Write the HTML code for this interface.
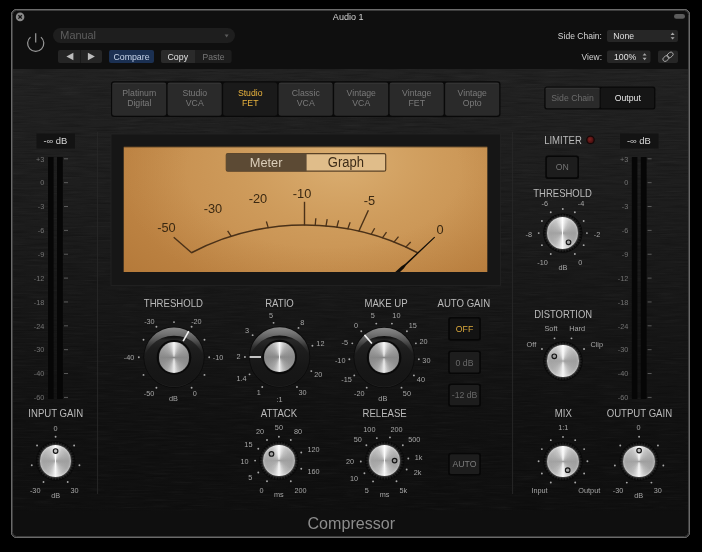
<!DOCTYPE html>
<html><head><meta charset="utf-8"><style>
html,body{margin:0;padding:0;background:#000;width:702px;height:552px;overflow:hidden;position:relative}
svg.l{display:block;position:absolute;left:0;top:0;will-change:transform}
text{font-family:"Liberation Sans", sans-serif}
.knob{position:absolute;border-radius:50%;box-shadow:0 0 2px 0.5px rgba(255,255,255,0.4), inset 0 0 2.5px 0.5px rgba(255,255,255,0.45)}
.knob.dk{box-shadow:0 0 1px rgba(255,255,255,0.25)}
</style></head><body>
<svg class="l" width="702" height="552" viewBox="0 0 702 552">
<defs>
<clipPath id="panelclip"><rect x="12" y="69" width="677" height="468"/></clipPath>
<linearGradient id="panelgrad" x1="0" y1="0" x2="0" y2="1">
 <stop offset="0" stop-color="#222222"/>
 <stop offset="0.25" stop-color="#1e1e1e"/>
 <stop offset="0.5" stop-color="#181818"/>
 <stop offset="0.75" stop-color="#121212"/>
 <stop offset="1" stop-color="#0f0f0f"/>
</linearGradient>
<filter id="brushD" x="0" y="0" width="1" height="1">
 <feTurbulence type="fractalNoise" baseFrequency="0.035 0.6" numOctaves="2" seed="4"/>
 <feColorMatrix type="matrix" values="0 0 0 0 0  0 0 0 0 0  0 0 0 0 0  2.2 0 0 0 -1.0"/>
</filter>
<filter id="brushL" x="0" y="0" width="1" height="1">
 <feTurbulence type="fractalNoise" baseFrequency="0.035 0.6" numOctaves="2" seed="9"/>
 <feColorMatrix type="matrix" values="0 0 0 0 1  0 0 0 0 1  0 0 0 0 1  1.2 0 0 0 -0.62"/>
</filter>
<linearGradient id="bottomfade" x1="0" y1="0" x2="0" y2="1">
 <stop offset="0" stop-color="#0f0f0f" stop-opacity="0.6"/>
 <stop offset="0.1" stop-color="#0f0f0f" stop-opacity="1"/>
 <stop offset="1" stop-color="#0f0f0f" stop-opacity="1"/>
</linearGradient>
<radialGradient id="vuglow" cx="0.6" cy="0.12" r="0.62" gradientTransform="translate(0.6 0.12) scale(1 1.9) translate(-0.6 -0.12)">
 <stop offset="0" stop-color="#dbaf72" stop-opacity="1"/>
 <stop offset="0.45" stop-color="#d4a464" stop-opacity="0.65"/>
 <stop offset="1" stop-color="#d4a464" stop-opacity="0"/>
</radialGradient>
<radialGradient id="vuvig" cx="0.55" cy="0.2" r="0.75" gradientTransform="translate(0.55 0.2) scale(1 1.6) translate(-0.55 -0.2)">
 <stop offset="0.5" stop-color="#9a5c1c" stop-opacity="0"/>
 <stop offset="1" stop-color="#9a5c1c" stop-opacity="0.36"/>
</radialGradient>
<linearGradient id="ringgrad" x1="0" y1="0" x2="0" y2="1">
 <stop offset="0" stop-color="#8a8a8a"/>
 <stop offset="0.1" stop-color="#747474"/>
 <stop offset="0.2" stop-color="#585858"/>
 <stop offset="0.32" stop-color="#323232"/>
 <stop offset="0.44" stop-color="#1c1c1c"/>
 <stop offset="0.6" stop-color="#171717"/>
 <stop offset="0.88" stop-color="#191919"/>
 <stop offset="1" stop-color="#242424"/>
</linearGradient>
<linearGradient id="ringinner" x1="0" y1="0" x2="0" y2="1">
 <stop offset="0" stop-color="#0c0c0c"/>
 <stop offset="0.03" stop-color="#141414"/>
 <stop offset="0.07" stop-color="#282828"/>
 <stop offset="0.2" stop-color="#1e1e1e"/>
 <stop offset="0.5" stop-color="#171717"/>
 <stop offset="1" stop-color="#141414"/>
</linearGradient>
<radialGradient id="led" cx="0.4" cy="0.4" r="0.6">
 <stop offset="0" stop-color="#7e2220"/>
 <stop offset="1" stop-color="#4a0e0e"/>
</radialGradient>
</defs>
<rect x="0" y="0" width="702" height="552" fill="#000"/>
<rect x="11.5" y="9.5" width="678" height="528" rx="5" ry="5" fill="#0f0f0f" stroke="#7c7c7c" stroke-width="1"/>
<rect x="12" y="69" width="677" height="468" fill="url(#panelgrad)"/>
<rect x="12" y="69" width="677" height="442" filter="url(#brushD)" opacity="0.2"/>
<rect x="12" y="69" width="677" height="442" filter="url(#brushL)" opacity="0.06"/>
<rect x="12" y="510" width="677" height="27" fill="url(#bottomfade)"/>
<rect x="12.5" y="10.5" width="676" height="526" rx="4" ry="4" fill="none" stroke="#3c3c3c" stroke-width="1"/>
<rect x="11.5" y="9.5" width="678" height="528" rx="5" ry="5" fill="none" stroke="#6a6a6a" stroke-width="1"/>
<circle cx="20.1" cy="16.9" r="4.3" fill="#8a8a8a"/>
<path d="M18.4 15.2 L21.8 18.6 M21.8 15.2 L18.4 18.6" stroke="#141414" stroke-width="1.3"/>
<text x="348.20" y="19.87" font-size="9.68" fill="#d4d4d4" text-anchor="middle" textLength="30.70" lengthAdjust="spacingAndGlyphs" >Audio 1</text>
<rect x="674" y="14" width="11" height="4.8" rx="2.4" fill="#5c5c5c"/>
<path d="M30.49 37.1 A8.1 8.1 0 1 0 40.91 37.1" fill="none" stroke="#9a9a9a" stroke-width="1.2"/>
<line x1="35.7" y1="33.2" x2="35.7" y2="42.4" stroke="#9a9a9a" stroke-width="1.2"/>
<rect x="53" y="28" width="182" height="15" rx="7.5" fill="#1e1e1e"/>
<text x="60.30" y="39.48" font-size="11.66" fill="#5e5e5e" text-anchor="start" textLength="35.75" lengthAdjust="spacingAndGlyphs" >Manual</text>
<path d="M224.6 34.6 L228.6 34.6 L226.6 37.6 Z" fill="#5a5a5a"/>
<rect x="58" y="50" width="44" height="13" rx="2" fill="#252525"/>
<line x1="80.5" y1="50" x2="80.5" y2="63" stroke="#1a1a1a" stroke-width="1"/>
<path d="M66.4 56.5 L73.4 52.8 L73.4 60.2 Z" fill="#bdbdbd"/>
<path d="M94.9 56.5 L87.9 52.8 L87.9 60.2 Z" fill="#bdbdbd"/>
<rect x="109" y="50" width="45" height="13" rx="2" fill="#1b3052"/>
<text x="131.50" y="59.87" font-size="9.42" fill="#c6d3e8" text-anchor="middle" textLength="36.19" lengthAdjust="spacingAndGlyphs" >Compare</text>
<rect x="161" y="50" width="70.6" height="13" rx="2" fill="#1d1d1d"/>
<path d="M163 50 H195 V63 H163 A2 2 0 0 1 161 61 V52 A2 2 0 0 1 163 50 Z" fill="#2a2a2a"/>
<text x="177.80" y="59.87" font-size="9.42" fill="#e2e2e2" text-anchor="middle" textLength="20.54" lengthAdjust="spacingAndGlyphs" >Copy</text>
<text x="213.50" y="59.79" font-size="9.20" fill="#787878" text-anchor="middle" textLength="21.99" lengthAdjust="spacingAndGlyphs" >Paste</text>
<text x="602.00" y="39.28" font-size="9.15" fill="#d2d2d2" text-anchor="end" textLength="44.20" lengthAdjust="spacingAndGlyphs" >Side Chain:</text>
<rect x="607" y="30" width="71" height="12" rx="2" fill="#262626"/>
<text x="613.30" y="39.33" font-size="9.31" fill="#e0e0e0" text-anchor="start" textLength="20.80" lengthAdjust="spacingAndGlyphs" >None</text>
<path d="M670.6 35 L672.6 32.6 L674.6 35 Z M670.6 37.2 L672.6 39.6 L674.6 37.2 Z" fill="#a8a8a8"/>
<text x="602.00" y="59.82" font-size="8.99" fill="#d2d2d2" text-anchor="end" textLength="20.39" lengthAdjust="spacingAndGlyphs" >View:</text>
<rect x="607" y="50.5" width="43.5" height="12.5" rx="2" fill="#262626"/>
<text x="614.00" y="59.95" font-size="9.36" fill="#e0e0e0" text-anchor="start" textLength="22.38" lengthAdjust="spacingAndGlyphs" >100%</text>
<path d="M642.6 55.6 L644.6 53.2 L646.6 55.6 Z M642.6 57.8 L644.6 60.2 L646.6 57.8 Z" fill="#a8a8a8"/>
<rect x="658" y="50.5" width="20" height="12.5" rx="2" fill="#262626"/>
<g transform="translate(668 56.75) rotate(-40)" fill="none" stroke="#aaaaaa" stroke-width="0.9"><rect x="-6" y="-2.2" width="6.6" height="4.4" rx="2.2"/><rect x="-0.6" y="-2.2" width="6.6" height="4.4" rx="2.2"/></g>
<rect x="111.0" y="81.3" width="389.5" height="35.6" rx="3" fill="#090909"/>
<rect x="112.10" y="82.4" width="54.10" height="33.3" rx="2.5" fill="#2a2a2a"/>
<rect x="112.70" y="82.9" width="52.90" height="1" fill="#353535"/>
<text x="139.25" y="96.23" font-size="9.31" fill="#7a7a7a" text-anchor="middle" textLength="33.85" lengthAdjust="spacingAndGlyphs" >Platinum</text>
<text x="139.25" y="105.53" font-size="9.31" fill="#7a7a7a" text-anchor="middle" textLength="24.18" lengthAdjust="spacingAndGlyphs" >Digital</text>
<rect x="167.60" y="82.4" width="54.10" height="33.3" rx="2.5" fill="#2a2a2a"/>
<rect x="168.20" y="82.9" width="52.90" height="1" fill="#353535"/>
<text x="194.75" y="96.23" font-size="9.31" fill="#7a7a7a" text-anchor="middle" textLength="24.67" lengthAdjust="spacingAndGlyphs" >Studio</text>
<text x="194.75" y="105.53" font-size="9.31" fill="#7a7a7a" text-anchor="middle" textLength="17.89" lengthAdjust="spacingAndGlyphs" >VCA</text>
<rect x="223.10" y="82.4" width="54.10" height="33.3" rx="2.5" fill="#1a1a1a"/>
<text x="250.25" y="96.23" font-size="9.31" fill="#e9b33e" text-anchor="middle" textLength="24.67" lengthAdjust="spacingAndGlyphs" >Studio</text>
<text x="250.25" y="105.53" font-size="9.31" fill="#e9b33e" text-anchor="middle" textLength="16.43" lengthAdjust="spacingAndGlyphs" >FET</text>
<rect x="278.60" y="82.4" width="54.10" height="33.3" rx="2.5" fill="#2a2a2a"/>
<rect x="279.20" y="82.9" width="52.90" height="1" fill="#353535"/>
<text x="305.75" y="96.23" font-size="9.31" fill="#7a7a7a" text-anchor="middle" textLength="28.04" lengthAdjust="spacingAndGlyphs" >Classic</text>
<text x="305.75" y="105.53" font-size="9.31" fill="#7a7a7a" text-anchor="middle" textLength="17.89" lengthAdjust="spacingAndGlyphs" >VCA</text>
<rect x="334.10" y="82.4" width="54.10" height="33.3" rx="2.5" fill="#2a2a2a"/>
<rect x="334.70" y="82.9" width="52.90" height="1" fill="#353535"/>
<text x="361.25" y="96.23" font-size="9.31" fill="#7a7a7a" text-anchor="middle" textLength="29.35" lengthAdjust="spacingAndGlyphs" >Vintage</text>
<text x="361.25" y="105.53" font-size="9.31" fill="#7a7a7a" text-anchor="middle" textLength="17.89" lengthAdjust="spacingAndGlyphs" >VCA</text>
<rect x="389.60" y="82.4" width="54.10" height="33.3" rx="2.5" fill="#2a2a2a"/>
<rect x="390.20" y="82.9" width="52.90" height="1" fill="#353535"/>
<text x="416.75" y="96.23" font-size="9.31" fill="#7a7a7a" text-anchor="middle" textLength="29.35" lengthAdjust="spacingAndGlyphs" >Vintage</text>
<text x="416.75" y="105.53" font-size="9.31" fill="#7a7a7a" text-anchor="middle" textLength="16.43" lengthAdjust="spacingAndGlyphs" >FET</text>
<rect x="445.10" y="82.4" width="54.10" height="33.3" rx="2.5" fill="#2a2a2a"/>
<rect x="445.70" y="82.9" width="52.90" height="1" fill="#353535"/>
<text x="472.25" y="96.23" font-size="9.31" fill="#7a7a7a" text-anchor="middle" textLength="29.35" lengthAdjust="spacingAndGlyphs" >Vintage</text>
<text x="472.25" y="105.53" font-size="9.31" fill="#7a7a7a" text-anchor="middle" textLength="18.86" lengthAdjust="spacingAndGlyphs" >Opto</text>
<rect x="544.3" y="86.5" width="111.1" height="23" rx="2.5" fill="#080808"/>
<rect x="545.6" y="87.8" width="54" height="20.4" rx="1.5" fill="#2a2a2a"/>
<rect x="545.6" y="87.8" width="54" height="1" fill="#353535"/>
<rect x="600.6" y="87.8" width="53.5" height="20.4" rx="1.5" fill="#151515"/>
<text x="572.60" y="101.33" font-size="9.31" fill="#6c6c6c" text-anchor="middle" textLength="42.56" lengthAdjust="spacingAndGlyphs" >Side Chain</text>
<text x="627.80" y="101.33" font-size="9.31" fill="#e8e8e8" text-anchor="middle" textLength="26.12" lengthAdjust="spacingAndGlyphs" >Output</text>
<line x1="97.6" y1="132" x2="97.6" y2="494" stroke="#272727" stroke-width="1"/>
<line x1="512.6" y1="132" x2="512.6" y2="494" stroke="#272727" stroke-width="1"/>
<rect x="36.5" y="133.5" width="38.5" height="15" fill="#131313"/>
<text x="55.40" y="143.93" font-size="8.46" fill="#dadada" text-anchor="middle" textLength="23.94" lengthAdjust="spacingAndGlyphs" >-∞ dB</text>
<rect x="48" y="157" width="5.6" height="242" fill="#060606"/>
<rect x="57" y="157" width="5.8" height="242" fill="#060606"/>
<text x="44.30" y="161.60" font-size="7.81" fill="#747474" text-anchor="end" textLength="8.32" lengthAdjust="spacingAndGlyphs" >+3</text>
<line x1="64" y1="158.80" x2="68" y2="158.80" stroke="#7a7a7a" stroke-width="0.7"/>
<text x="44.30" y="185.46" font-size="7.81" fill="#747474" text-anchor="end" textLength="4.06" lengthAdjust="spacingAndGlyphs" >0</text>
<line x1="64" y1="182.66" x2="68" y2="182.66" stroke="#7a7a7a" stroke-width="0.7"/>
<text x="44.30" y="209.32" font-size="7.81" fill="#747474" text-anchor="end" textLength="6.49" lengthAdjust="spacingAndGlyphs" >-3</text>
<line x1="64" y1="206.52" x2="68" y2="206.52" stroke="#7a7a7a" stroke-width="0.7"/>
<text x="44.30" y="233.18" font-size="7.81" fill="#747474" text-anchor="end" textLength="6.49" lengthAdjust="spacingAndGlyphs" >-6</text>
<line x1="64" y1="230.38" x2="68" y2="230.38" stroke="#7a7a7a" stroke-width="0.7"/>
<text x="44.30" y="257.04" font-size="7.81" fill="#747474" text-anchor="end" textLength="6.49" lengthAdjust="spacingAndGlyphs" >-9</text>
<line x1="64" y1="254.24" x2="68" y2="254.24" stroke="#7a7a7a" stroke-width="0.7"/>
<text x="44.30" y="280.90" font-size="7.81" fill="#747474" text-anchor="end" textLength="10.55" lengthAdjust="spacingAndGlyphs" >-12</text>
<line x1="64" y1="278.10" x2="68" y2="278.10" stroke="#7a7a7a" stroke-width="0.7"/>
<text x="44.30" y="304.76" font-size="7.81" fill="#747474" text-anchor="end" textLength="10.55" lengthAdjust="spacingAndGlyphs" >-18</text>
<line x1="64" y1="301.96" x2="68" y2="301.96" stroke="#7a7a7a" stroke-width="0.7"/>
<text x="44.30" y="328.62" font-size="7.81" fill="#747474" text-anchor="end" textLength="10.55" lengthAdjust="spacingAndGlyphs" >-24</text>
<line x1="64" y1="325.82" x2="68" y2="325.82" stroke="#7a7a7a" stroke-width="0.7"/>
<text x="44.30" y="352.48" font-size="7.81" fill="#747474" text-anchor="end" textLength="10.55" lengthAdjust="spacingAndGlyphs" >-30</text>
<line x1="64" y1="349.68" x2="68" y2="349.68" stroke="#7a7a7a" stroke-width="0.7"/>
<text x="44.30" y="376.34" font-size="7.81" fill="#747474" text-anchor="end" textLength="10.55" lengthAdjust="spacingAndGlyphs" >-40</text>
<line x1="64" y1="373.54" x2="68" y2="373.54" stroke="#7a7a7a" stroke-width="0.7"/>
<text x="44.30" y="400.20" font-size="7.81" fill="#747474" text-anchor="end" textLength="10.55" lengthAdjust="spacingAndGlyphs" >-60</text>
<line x1="64" y1="397.40" x2="68" y2="397.40" stroke="#7a7a7a" stroke-width="0.7"/>
<rect x="620" y="133.5" width="38.5" height="15" fill="#131313"/>
<text x="638.90" y="143.93" font-size="8.46" fill="#dadada" text-anchor="middle" textLength="23.94" lengthAdjust="spacingAndGlyphs" >-∞ dB</text>
<rect x="631.8" y="157" width="5.6" height="242" fill="#060606"/>
<rect x="640.8" y="157" width="5.8" height="242" fill="#060606"/>
<text x="628.30" y="161.60" font-size="7.81" fill="#747474" text-anchor="end" textLength="8.32" lengthAdjust="spacingAndGlyphs" >+3</text>
<line x1="647.6" y1="158.80" x2="651.6" y2="158.80" stroke="#7a7a7a" stroke-width="0.7"/>
<text x="628.30" y="185.46" font-size="7.81" fill="#747474" text-anchor="end" textLength="4.06" lengthAdjust="spacingAndGlyphs" >0</text>
<line x1="647.6" y1="182.66" x2="651.6" y2="182.66" stroke="#7a7a7a" stroke-width="0.7"/>
<text x="628.30" y="209.32" font-size="7.81" fill="#747474" text-anchor="end" textLength="6.49" lengthAdjust="spacingAndGlyphs" >-3</text>
<line x1="647.6" y1="206.52" x2="651.6" y2="206.52" stroke="#7a7a7a" stroke-width="0.7"/>
<text x="628.30" y="233.18" font-size="7.81" fill="#747474" text-anchor="end" textLength="6.49" lengthAdjust="spacingAndGlyphs" >-6</text>
<line x1="647.6" y1="230.38" x2="651.6" y2="230.38" stroke="#7a7a7a" stroke-width="0.7"/>
<text x="628.30" y="257.04" font-size="7.81" fill="#747474" text-anchor="end" textLength="6.49" lengthAdjust="spacingAndGlyphs" >-9</text>
<line x1="647.6" y1="254.24" x2="651.6" y2="254.24" stroke="#7a7a7a" stroke-width="0.7"/>
<text x="628.30" y="280.90" font-size="7.81" fill="#747474" text-anchor="end" textLength="10.55" lengthAdjust="spacingAndGlyphs" >-12</text>
<line x1="647.6" y1="278.10" x2="651.6" y2="278.10" stroke="#7a7a7a" stroke-width="0.7"/>
<text x="628.30" y="304.76" font-size="7.81" fill="#747474" text-anchor="end" textLength="10.55" lengthAdjust="spacingAndGlyphs" >-18</text>
<line x1="647.6" y1="301.96" x2="651.6" y2="301.96" stroke="#7a7a7a" stroke-width="0.7"/>
<text x="628.30" y="328.62" font-size="7.81" fill="#747474" text-anchor="end" textLength="10.55" lengthAdjust="spacingAndGlyphs" >-24</text>
<line x1="647.6" y1="325.82" x2="651.6" y2="325.82" stroke="#7a7a7a" stroke-width="0.7"/>
<text x="628.30" y="352.48" font-size="7.81" fill="#747474" text-anchor="end" textLength="10.55" lengthAdjust="spacingAndGlyphs" >-30</text>
<line x1="647.6" y1="349.68" x2="651.6" y2="349.68" stroke="#7a7a7a" stroke-width="0.7"/>
<text x="628.30" y="376.34" font-size="7.81" fill="#747474" text-anchor="end" textLength="10.55" lengthAdjust="spacingAndGlyphs" >-40</text>
<line x1="647.6" y1="373.54" x2="651.6" y2="373.54" stroke="#7a7a7a" stroke-width="0.7"/>
<text x="628.30" y="400.20" font-size="7.81" fill="#747474" text-anchor="end" textLength="10.55" lengthAdjust="spacingAndGlyphs" >-60</text>
<line x1="647.6" y1="397.40" x2="651.6" y2="397.40" stroke="#7a7a7a" stroke-width="0.7"/>
<rect x="111" y="134" width="389.5" height="151.5" fill="#161616" stroke="#242424" stroke-width="0.8"/>
<svg x="123.5" y="146.5" width="364" height="125.5" overflow="hidden"><rect x="0" y="0" width="364" height="125.5" fill="#c38a4a"/><rect x="0" y="0" width="364" height="125.5" fill="url(#vuglow)"/><rect x="0" y="0" width="364" height="125.5" fill="url(#vushade)"/><rect x="0" y="0" width="364" height="125.5" fill="url(#vuvig)"/></svg>
<line x1="123.5" y1="147" x2="487.5" y2="147" stroke="#000" stroke-opacity="0.45" stroke-width="1"/>
<rect x="226.3" y="153.6" width="159.4" height="17.6" rx="1.5" fill="#e0bd8a" stroke="#5a4226" stroke-width="1.2"/>
<path d="M227.8 153.6 H306.6 V171.2 H227.8 A1.5 1.5 0 0 1 226.3 169.7 V155.1 A1.5 1.5 0 0 1 227.8 153.6 Z" fill="#5c4a34"/>
<text x="266.10" y="167.10" font-size="13.70" fill="#dccfbb" text-anchor="middle" textLength="32.72" lengthAdjust="spacingAndGlyphs" >Meter</text>
<text x="345.90" y="167.18" font-size="13.91" fill="#3d2c18" text-anchor="middle" textLength="36.13" lengthAdjust="spacingAndGlyphs" >Graph</text>
<path d="M191.45 252.73 A 244.3 244.3 0 0 1 417.55 252.73" fill="none" stroke="#4a3118" stroke-width="1.6"/>
<line x1="191.83" y1="253.06" x2="173.72" y2="237.31" stroke="#4a3118" stroke-width="1.4"/>
<line x1="231.40" y1="236.70" x2="227.63" y2="230.80" stroke="#4a3118" stroke-width="1.3"/>
<line x1="268.35" y1="228.19" x2="266.38" y2="221.47" stroke="#4a3118" stroke-width="1.3"/>
<line x1="304.50" y1="225.50" x2="304.50" y2="201.80" stroke="#4a3118" stroke-width="1.4"/>
<line x1="315.20" y1="225.73" x2="315.83" y2="218.26" stroke="#4a3118" stroke-width="1.3"/>
<line x1="325.93" y1="226.44" x2="327.20" y2="219.05" stroke="#4a3118" stroke-width="1.3"/>
<line x1="336.73" y1="227.64" x2="338.62" y2="220.38" stroke="#4a3118" stroke-width="1.3"/>
<line x1="347.63" y1="229.34" x2="350.14" y2="222.27" stroke="#4a3118" stroke-width="1.3"/>
<line x1="358.67" y1="231.58" x2="368.38" y2="210.18" stroke="#4a3118" stroke-width="1.4"/>
<line x1="370.94" y1="234.71" x2="374.66" y2="228.20" stroke="#4a3118" stroke-width="1.3"/>
<line x1="382.25" y1="238.21" x2="386.51" y2="232.03" stroke="#4a3118" stroke-width="1.3"/>
<line x1="393.77" y1="242.40" x2="398.53" y2="236.61" stroke="#4a3118" stroke-width="1.3"/>
<line x1="405.49" y1="247.37" x2="410.72" y2="242.00" stroke="#4a3118" stroke-width="1.3"/>
<clipPath id="vuclip"><rect x="123.5" y="146.5" width="364" height="125.5"/></clipPath>
<g clip-path="url(#vuclip)"><path d="M435.08 237.60 L406.09 265.17 L403.72 268.49 L392.13 279.51 L389.80 277.03 L401.53 266.15 L404.99 264.00 L434.32 236.80 Z" fill="#120e08"/></g>
<text x="166.40" y="231.70" font-size="13.70" fill="#3b2912" text-anchor="middle" textLength="18.50" lengthAdjust="spacingAndGlyphs" >-50</text>
<text x="213.00" y="212.90" font-size="13.70" fill="#3b2912" text-anchor="middle" textLength="18.50" lengthAdjust="spacingAndGlyphs" >-30</text>
<text x="258.00" y="202.70" font-size="13.70" fill="#3b2912" text-anchor="middle" textLength="18.50" lengthAdjust="spacingAndGlyphs" >-20</text>
<text x="302.10" y="198.20" font-size="13.70" fill="#3b2912" text-anchor="middle" textLength="18.50" lengthAdjust="spacingAndGlyphs" >-10</text>
<text x="369.40" y="204.90" font-size="13.70" fill="#3b2912" text-anchor="middle" textLength="11.38" lengthAdjust="spacingAndGlyphs" >-5</text>
<text x="440.10" y="233.80" font-size="13.70" fill="#3b2912" text-anchor="middle" textLength="7.12" lengthAdjust="spacingAndGlyphs" >0</text>
<text x="173.40" y="307.08" font-size="10.27" fill="#bababa" text-anchor="middle" textLength="59.21" lengthAdjust="spacingAndGlyphs" >THRESHOLD</text>
<circle cx="156.40" cy="387.78" r="0.95" fill="#a8a8a8"/>
<circle cx="143.52" cy="374.90" r="0.95" fill="#a8a8a8"/>
<circle cx="138.80" cy="357.30" r="0.95" fill="#a8a8a8"/>
<circle cx="143.52" cy="339.70" r="0.95" fill="#a8a8a8"/>
<circle cx="156.40" cy="326.82" r="0.95" fill="#a8a8a8"/>
<circle cx="174.00" cy="322.10" r="0.95" fill="#a8a8a8"/>
<circle cx="191.60" cy="326.82" r="0.95" fill="#a8a8a8"/>
<circle cx="204.48" cy="339.70" r="0.95" fill="#a8a8a8"/>
<circle cx="209.20" cy="357.30" r="0.95" fill="#a8a8a8"/>
<circle cx="204.48" cy="374.90" r="0.95" fill="#a8a8a8"/>
<circle cx="191.60" cy="387.78" r="0.95" fill="#a8a8a8"/>
<text x="149.40" y="323.60" font-size="7.81" fill="#a6a6a6" text-anchor="middle" textLength="10.55" lengthAdjust="spacingAndGlyphs" >-30</text>
<text x="196.40" y="323.60" font-size="7.81" fill="#a6a6a6" text-anchor="middle" textLength="10.55" lengthAdjust="spacingAndGlyphs" >-20</text>
<text x="129.00" y="359.80" font-size="7.81" fill="#a6a6a6" text-anchor="middle" textLength="10.55" lengthAdjust="spacingAndGlyphs" >-40</text>
<text x="218.00" y="359.80" font-size="7.81" fill="#a6a6a6" text-anchor="middle" textLength="10.55" lengthAdjust="spacingAndGlyphs" >-10</text>
<text x="149.10" y="395.50" font-size="7.81" fill="#a6a6a6" text-anchor="middle" textLength="10.55" lengthAdjust="spacingAndGlyphs" >-50</text>
<text x="194.70" y="395.50" font-size="7.81" fill="#a6a6a6" text-anchor="middle" textLength="4.06" lengthAdjust="spacingAndGlyphs" >0</text>
<text x="173.40" y="401.10" font-size="7.81" fill="#a6a6a6" text-anchor="middle" textLength="8.93" lengthAdjust="spacingAndGlyphs" >dB</text>
<clipPath id="kc1"><circle cx="174" cy="357.3" r="29.2"/></clipPath>
<circle cx="174" cy="357.3" r="30.6" fill="#0b0b0b"/>
<circle cx="174" cy="357.3" r="29.8" fill="url(#ringgrad)"/>
<circle cx="174" cy="367.2" r="31.5" fill="url(#ringinner)" clip-path="url(#kc1)"/>
<circle cx="174" cy="357.3" r="17.3" fill="#090909"/>
<line x1="183.16" y1="341.11" x2="188.77" y2="331.19" stroke="#f2f2f2" stroke-width="1.6"/>
<text x="279.50" y="307.08" font-size="10.27" fill="#bababa" text-anchor="middle" textLength="28.62" lengthAdjust="spacingAndGlyphs" >RATIO</text>
<circle cx="262.25" cy="387.05" r="0.95" fill="#a8a8a8"/>
<circle cx="249.55" cy="374.35" r="0.95" fill="#a8a8a8"/>
<circle cx="244.90" cy="357.00" r="0.95" fill="#a8a8a8"/>
<circle cx="252.63" cy="335.16" r="0.95" fill="#a8a8a8"/>
<circle cx="273.57" cy="322.83" r="0.95" fill="#a8a8a8"/>
<circle cx="298.50" cy="327.90" r="0.95" fill="#a8a8a8"/>
<circle cx="312.41" cy="345.70" r="0.95" fill="#a8a8a8"/>
<circle cx="311.30" cy="371.11" r="0.95" fill="#a8a8a8"/>
<circle cx="296.95" cy="387.05" r="0.95" fill="#a8a8a8"/>
<text x="271.10" y="317.80" font-size="7.81" fill="#a6a6a6" text-anchor="middle" textLength="4.06" lengthAdjust="spacingAndGlyphs" >5</text>
<text x="302.30" y="324.50" font-size="7.81" fill="#a6a6a6" text-anchor="middle" textLength="4.06" lengthAdjust="spacingAndGlyphs" >8</text>
<text x="247.00" y="332.80" font-size="7.81" fill="#a6a6a6" text-anchor="middle" textLength="4.06" lengthAdjust="spacingAndGlyphs" >3</text>
<text x="238.50" y="359.40" font-size="7.81" fill="#a6a6a6" text-anchor="middle" textLength="4.06" lengthAdjust="spacingAndGlyphs" >2</text>
<text x="241.60" y="381.20" font-size="7.81" fill="#a6a6a6" text-anchor="middle" textLength="10.15" lengthAdjust="spacingAndGlyphs" >1.4</text>
<text x="258.80" y="395.30" font-size="7.81" fill="#a6a6a6" text-anchor="middle" textLength="4.06" lengthAdjust="spacingAndGlyphs" >1</text>
<text x="279.60" y="401.60" font-size="7.81" fill="#a6a6a6" text-anchor="middle" textLength="6.09" lengthAdjust="spacingAndGlyphs" >:1</text>
<text x="302.60" y="395.30" font-size="7.81" fill="#a6a6a6" text-anchor="middle" textLength="8.12" lengthAdjust="spacingAndGlyphs" >30</text>
<text x="318.20" y="376.60" font-size="7.81" fill="#a6a6a6" text-anchor="middle" textLength="8.12" lengthAdjust="spacingAndGlyphs" >20</text>
<text x="320.40" y="346.40" font-size="7.81" fill="#a6a6a6" text-anchor="middle" textLength="8.12" lengthAdjust="spacingAndGlyphs" >12</text>
<clipPath id="kc2"><circle cx="279.6" cy="357" r="29.2"/></clipPath>
<circle cx="279.6" cy="357" r="30.6" fill="#0b0b0b"/>
<circle cx="279.6" cy="357" r="29.8" fill="url(#ringgrad)"/>
<circle cx="279.6" cy="366.9" r="31.5" fill="url(#ringinner)" clip-path="url(#kc2)"/>
<circle cx="279.6" cy="357" r="17.3" fill="#090909"/>
<line x1="261.00" y1="357.00" x2="249.60" y2="357.00" stroke="#f2f2f2" stroke-width="1.6"/>
<text x="386.00" y="307.08" font-size="10.27" fill="#bababa" text-anchor="middle" textLength="43.21" lengthAdjust="spacingAndGlyphs" >MAKE UP</text>
<circle cx="366.70" cy="387.64" r="0.95" fill="#a8a8a8"/>
<circle cx="354.27" cy="375.42" r="0.95" fill="#a8a8a8"/>
<circle cx="349.35" cy="359.32" r="0.95" fill="#a8a8a8"/>
<circle cx="352.31" cy="343.35" r="0.95" fill="#a8a8a8"/>
<circle cx="361.27" cy="331.24" r="0.95" fill="#a8a8a8"/>
<circle cx="376.27" cy="323.59" r="0.95" fill="#a8a8a8"/>
<circle cx="391.93" cy="323.59" r="0.95" fill="#a8a8a8"/>
<circle cx="406.93" cy="331.24" r="0.95" fill="#a8a8a8"/>
<circle cx="415.89" cy="343.35" r="0.95" fill="#a8a8a8"/>
<circle cx="418.85" cy="359.32" r="0.95" fill="#a8a8a8"/>
<circle cx="413.93" cy="375.42" r="0.95" fill="#a8a8a8"/>
<circle cx="401.50" cy="387.64" r="0.95" fill="#a8a8a8"/>
<text x="356.00" y="327.70" font-size="7.81" fill="#a6a6a6" text-anchor="middle" textLength="4.06" lengthAdjust="spacingAndGlyphs" >0</text>
<text x="372.90" y="318.30" font-size="7.81" fill="#a6a6a6" text-anchor="middle" textLength="4.06" lengthAdjust="spacingAndGlyphs" >5</text>
<text x="396.40" y="318.30" font-size="7.81" fill="#a6a6a6" text-anchor="middle" textLength="8.12" lengthAdjust="spacingAndGlyphs" >10</text>
<text x="412.70" y="327.70" font-size="7.81" fill="#a6a6a6" text-anchor="middle" textLength="8.12" lengthAdjust="spacingAndGlyphs" >15</text>
<text x="423.60" y="344.00" font-size="7.81" fill="#a6a6a6" text-anchor="middle" textLength="8.12" lengthAdjust="spacingAndGlyphs" >20</text>
<text x="426.40" y="362.80" font-size="7.81" fill="#a6a6a6" text-anchor="middle" textLength="8.12" lengthAdjust="spacingAndGlyphs" >30</text>
<text x="420.90" y="381.70" font-size="7.81" fill="#a6a6a6" text-anchor="middle" textLength="8.12" lengthAdjust="spacingAndGlyphs" >40</text>
<text x="406.90" y="395.70" font-size="7.81" fill="#a6a6a6" text-anchor="middle" textLength="8.12" lengthAdjust="spacingAndGlyphs" >50</text>
<text x="382.80" y="401.10" font-size="7.81" fill="#a6a6a6" text-anchor="middle" textLength="8.93" lengthAdjust="spacingAndGlyphs" >dB</text>
<text x="359.30" y="395.70" font-size="7.81" fill="#a6a6a6" text-anchor="middle" textLength="10.55" lengthAdjust="spacingAndGlyphs" >-20</text>
<text x="346.60" y="381.70" font-size="7.81" fill="#a6a6a6" text-anchor="middle" textLength="10.55" lengthAdjust="spacingAndGlyphs" >-15</text>
<text x="340.20" y="363.10" font-size="7.81" fill="#a6a6a6" text-anchor="middle" textLength="10.55" lengthAdjust="spacingAndGlyphs" >-10</text>
<text x="344.80" y="344.90" font-size="7.81" fill="#a6a6a6" text-anchor="middle" textLength="6.49" lengthAdjust="spacingAndGlyphs" >-5</text>
<clipPath id="kc3"><circle cx="384.1" cy="357.5" r="29.2"/></clipPath>
<circle cx="384.1" cy="357.5" r="30.6" fill="#0b0b0b"/>
<circle cx="384.1" cy="357.5" r="29.8" fill="url(#ringgrad)"/>
<circle cx="384.1" cy="367.4" r="31.5" fill="url(#ringinner)" clip-path="url(#kc3)"/>
<circle cx="384.1" cy="357.5" r="17.3" fill="#090909"/>
<line x1="371.90" y1="343.46" x2="364.42" y2="334.86" stroke="#f2f2f2" stroke-width="1.6"/>
<text x="463.80" y="307.08" font-size="10.27" fill="#bababa" text-anchor="middle" textLength="52.63" lengthAdjust="spacingAndGlyphs" >AUTO GAIN</text>
<rect x="448.2" y="317" width="32.7" height="23.7" rx="2.5" fill="#070707"/>
<rect x="449.8" y="318.6" width="29.500000000000004" height="20.5" rx="1.5" fill="#131313"/>
<text x="464.55" y="332.18" font-size="9.31" fill="#dcaa3c" text-anchor="middle" textLength="17.40" lengthAdjust="spacingAndGlyphs" >OFF</text>
<rect x="448.2" y="350.4" width="32.7" height="23.6" rx="2.5" fill="#070707"/>
<rect x="449.8" y="352.0" width="29.500000000000004" height="20.400000000000002" rx="1.5" fill="#1d1d1d"/>
<text x="464.55" y="365.53" font-size="9.31" fill="#686868" text-anchor="middle" textLength="17.90" lengthAdjust="spacingAndGlyphs" >0 dB</text>
<rect x="448.2" y="383.4" width="32.7" height="23.4" rx="2.5" fill="#070707"/>
<rect x="449.8" y="385.0" width="29.500000000000004" height="20.2" rx="1.5" fill="#1d1d1d"/>
<text x="464.55" y="398.43" font-size="9.31" fill="#686868" text-anchor="middle" textLength="25.63" lengthAdjust="spacingAndGlyphs" >-12 dB</text>
<rect x="448.2" y="452.7" width="32.7" height="22.8" rx="2.5" fill="#070707"/>
<rect x="449.8" y="454.3" width="29.500000000000004" height="19.6" rx="1.5" fill="#1d1d1d"/>
<text x="464.55" y="467.43" font-size="9.31" fill="#7c7c7c" text-anchor="middle" textLength="24.01" lengthAdjust="spacingAndGlyphs" >AUTO</text>
<text x="279.00" y="417.28" font-size="10.27" fill="#bababa" text-anchor="middle" textLength="36.45" lengthAdjust="spacingAndGlyphs" >ATTACK</text>
<circle cx="267.00" cy="481.21" r="0.95" fill="#a8a8a8"/>
<circle cx="258.29" cy="472.50" r="0.95" fill="#a8a8a8"/>
<circle cx="255.10" cy="460.60" r="0.95" fill="#a8a8a8"/>
<circle cx="258.29" cy="448.70" r="0.95" fill="#a8a8a8"/>
<circle cx="267.00" cy="439.99" r="0.95" fill="#a8a8a8"/>
<circle cx="278.90" cy="436.80" r="0.95" fill="#a8a8a8"/>
<circle cx="290.80" cy="439.99" r="0.95" fill="#a8a8a8"/>
<circle cx="301.26" cy="452.46" r="0.95" fill="#a8a8a8"/>
<circle cx="301.26" cy="468.74" r="0.95" fill="#a8a8a8"/>
<circle cx="290.80" cy="481.21" r="0.95" fill="#a8a8a8"/>
<text x="278.90" y="430.30" font-size="7.81" fill="#a6a6a6" text-anchor="middle" textLength="8.12" lengthAdjust="spacingAndGlyphs" >50</text>
<text x="260.00" y="434.40" font-size="7.81" fill="#a6a6a6" text-anchor="middle" textLength="8.12" lengthAdjust="spacingAndGlyphs" >20</text>
<text x="298.10" y="434.40" font-size="7.81" fill="#a6a6a6" text-anchor="middle" textLength="8.12" lengthAdjust="spacingAndGlyphs" >80</text>
<text x="248.40" y="447.10" font-size="7.81" fill="#a6a6a6" text-anchor="middle" textLength="8.12" lengthAdjust="spacingAndGlyphs" >15</text>
<text x="313.60" y="451.80" font-size="7.81" fill="#a6a6a6" text-anchor="middle" textLength="12.18" lengthAdjust="spacingAndGlyphs" >120</text>
<text x="244.50" y="464.10" font-size="7.81" fill="#a6a6a6" text-anchor="middle" textLength="8.12" lengthAdjust="spacingAndGlyphs" >10</text>
<text x="313.60" y="473.50" font-size="7.81" fill="#a6a6a6" text-anchor="middle" textLength="12.18" lengthAdjust="spacingAndGlyphs" >160</text>
<text x="250.30" y="480.00" font-size="7.81" fill="#a6a6a6" text-anchor="middle" textLength="4.06" lengthAdjust="spacingAndGlyphs" >5</text>
<text x="261.50" y="493.10" font-size="7.81" fill="#a6a6a6" text-anchor="middle" textLength="4.06" lengthAdjust="spacingAndGlyphs" >0</text>
<text x="278.90" y="496.70" font-size="7.81" fill="#a6a6a6" text-anchor="middle" textLength="9.73" lengthAdjust="spacingAndGlyphs" >ms</text>
<text x="300.60" y="493.10" font-size="7.81" fill="#a6a6a6" text-anchor="middle" textLength="12.18" lengthAdjust="spacingAndGlyphs" >200</text>
<circle cx="278.9" cy="460.6" r="19.7" fill="#090909"/>
<line x1="278.90" y1="444.10" x2="278.90" y2="441.60" stroke="#1a1a1a" stroke-width="1.4"/>
<line x1="281.48" y1="444.30" x2="281.87" y2="441.83" stroke="#1a1a1a" stroke-width="1.4"/>
<line x1="284.00" y1="444.91" x2="284.77" y2="442.53" stroke="#1a1a1a" stroke-width="1.4"/>
<line x1="286.39" y1="445.90" x2="287.53" y2="443.67" stroke="#1a1a1a" stroke-width="1.4"/>
<line x1="288.60" y1="447.25" x2="290.07" y2="445.23" stroke="#1a1a1a" stroke-width="1.4"/>
<line x1="290.57" y1="448.93" x2="292.34" y2="447.16" stroke="#1a1a1a" stroke-width="1.4"/>
<line x1="292.25" y1="450.90" x2="294.27" y2="449.43" stroke="#1a1a1a" stroke-width="1.4"/>
<line x1="293.60" y1="453.11" x2="295.83" y2="451.97" stroke="#1a1a1a" stroke-width="1.4"/>
<line x1="294.59" y1="455.50" x2="296.97" y2="454.73" stroke="#1a1a1a" stroke-width="1.4"/>
<line x1="295.20" y1="458.02" x2="297.67" y2="457.63" stroke="#1a1a1a" stroke-width="1.4"/>
<line x1="295.40" y1="460.60" x2="297.90" y2="460.60" stroke="#1a1a1a" stroke-width="1.4"/>
<line x1="295.20" y1="463.18" x2="297.67" y2="463.57" stroke="#1a1a1a" stroke-width="1.4"/>
<line x1="294.59" y1="465.70" x2="296.97" y2="466.47" stroke="#1a1a1a" stroke-width="1.4"/>
<line x1="293.60" y1="468.09" x2="295.83" y2="469.23" stroke="#1a1a1a" stroke-width="1.4"/>
<line x1="292.25" y1="470.30" x2="294.27" y2="471.77" stroke="#1a1a1a" stroke-width="1.4"/>
<line x1="290.57" y1="472.27" x2="292.34" y2="474.04" stroke="#1a1a1a" stroke-width="1.4"/>
<line x1="288.60" y1="473.95" x2="290.07" y2="475.97" stroke="#1a1a1a" stroke-width="1.4"/>
<line x1="286.39" y1="475.30" x2="287.53" y2="477.53" stroke="#1a1a1a" stroke-width="1.4"/>
<line x1="284.00" y1="476.29" x2="284.77" y2="478.67" stroke="#1a1a1a" stroke-width="1.4"/>
<line x1="281.48" y1="476.90" x2="281.87" y2="479.37" stroke="#1a1a1a" stroke-width="1.4"/>
<line x1="278.90" y1="477.10" x2="278.90" y2="479.60" stroke="#1a1a1a" stroke-width="1.4"/>
<line x1="276.32" y1="476.90" x2="275.93" y2="479.37" stroke="#1a1a1a" stroke-width="1.4"/>
<line x1="273.80" y1="476.29" x2="273.03" y2="478.67" stroke="#1a1a1a" stroke-width="1.4"/>
<line x1="271.41" y1="475.30" x2="270.27" y2="477.53" stroke="#1a1a1a" stroke-width="1.4"/>
<line x1="269.20" y1="473.95" x2="267.73" y2="475.97" stroke="#1a1a1a" stroke-width="1.4"/>
<line x1="267.23" y1="472.27" x2="265.46" y2="474.04" stroke="#1a1a1a" stroke-width="1.4"/>
<line x1="265.55" y1="470.30" x2="263.53" y2="471.77" stroke="#1a1a1a" stroke-width="1.4"/>
<line x1="264.20" y1="468.09" x2="261.97" y2="469.23" stroke="#1a1a1a" stroke-width="1.4"/>
<line x1="263.21" y1="465.70" x2="260.83" y2="466.47" stroke="#1a1a1a" stroke-width="1.4"/>
<line x1="262.60" y1="463.18" x2="260.13" y2="463.57" stroke="#1a1a1a" stroke-width="1.4"/>
<line x1="262.40" y1="460.60" x2="259.90" y2="460.60" stroke="#1a1a1a" stroke-width="1.4"/>
<line x1="262.60" y1="458.02" x2="260.13" y2="457.63" stroke="#1a1a1a" stroke-width="1.4"/>
<line x1="263.21" y1="455.50" x2="260.83" y2="454.73" stroke="#1a1a1a" stroke-width="1.4"/>
<line x1="264.20" y1="453.11" x2="261.97" y2="451.97" stroke="#1a1a1a" stroke-width="1.4"/>
<line x1="265.55" y1="450.90" x2="263.53" y2="449.43" stroke="#1a1a1a" stroke-width="1.4"/>
<line x1="267.23" y1="448.93" x2="265.46" y2="447.16" stroke="#1a1a1a" stroke-width="1.4"/>
<line x1="269.20" y1="447.25" x2="267.73" y2="445.23" stroke="#1a1a1a" stroke-width="1.4"/>
<line x1="271.41" y1="445.90" x2="270.27" y2="443.67" stroke="#1a1a1a" stroke-width="1.4"/>
<line x1="273.80" y1="444.91" x2="273.03" y2="442.53" stroke="#1a1a1a" stroke-width="1.4"/>
<line x1="276.32" y1="444.30" x2="275.93" y2="441.83" stroke="#1a1a1a" stroke-width="1.4"/>
<text x="384.60" y="417.28" font-size="10.27" fill="#bababa" text-anchor="middle" textLength="44.29" lengthAdjust="spacingAndGlyphs" >RELEASE</text>
<circle cx="373.06" cy="481.42" r="0.95" fill="#a8a8a8"/>
<circle cx="364.42" cy="473.21" r="0.95" fill="#a8a8a8"/>
<circle cx="360.81" cy="461.43" r="0.95" fill="#a8a8a8"/>
<circle cx="366.37" cy="445.30" r="0.95" fill="#a8a8a8"/>
<circle cx="376.85" cy="438.10" r="0.95" fill="#a8a8a8"/>
<circle cx="389.95" cy="437.41" r="0.95" fill="#a8a8a8"/>
<circle cx="402.83" cy="445.30" r="0.95" fill="#a8a8a8"/>
<circle cx="408.31" cy="458.53" r="0.95" fill="#a8a8a8"/>
<circle cx="406.67" cy="469.52" r="0.95" fill="#a8a8a8"/>
<circle cx="396.50" cy="481.21" r="0.95" fill="#a8a8a8"/>
<text x="369.40" y="431.80" font-size="7.81" fill="#a6a6a6" text-anchor="middle" textLength="12.18" lengthAdjust="spacingAndGlyphs" >100</text>
<text x="396.50" y="431.80" font-size="7.81" fill="#a6a6a6" text-anchor="middle" textLength="12.18" lengthAdjust="spacingAndGlyphs" >200</text>
<text x="357.80" y="441.60" font-size="7.81" fill="#a6a6a6" text-anchor="middle" textLength="8.12" lengthAdjust="spacingAndGlyphs" >50</text>
<text x="414.30" y="441.60" font-size="7.81" fill="#a6a6a6" text-anchor="middle" textLength="12.18" lengthAdjust="spacingAndGlyphs" >500</text>
<text x="350.10" y="464.10" font-size="7.81" fill="#a6a6a6" text-anchor="middle" textLength="8.12" lengthAdjust="spacingAndGlyphs" >20</text>
<text x="418.60" y="459.80" font-size="7.81" fill="#a6a6a6" text-anchor="middle" textLength="7.71" lengthAdjust="spacingAndGlyphs" >1k</text>
<text x="354.10" y="480.50" font-size="7.81" fill="#a6a6a6" text-anchor="middle" textLength="8.12" lengthAdjust="spacingAndGlyphs" >10</text>
<text x="417.60" y="475.00" font-size="7.81" fill="#a6a6a6" text-anchor="middle" textLength="7.71" lengthAdjust="spacingAndGlyphs" >2k</text>
<text x="366.90" y="493.10" font-size="7.81" fill="#a6a6a6" text-anchor="middle" textLength="4.06" lengthAdjust="spacingAndGlyphs" >5</text>
<text x="384.60" y="497.00" font-size="7.81" fill="#a6a6a6" text-anchor="middle" textLength="9.73" lengthAdjust="spacingAndGlyphs" >ms</text>
<text x="403.40" y="493.10" font-size="7.81" fill="#a6a6a6" text-anchor="middle" textLength="7.71" lengthAdjust="spacingAndGlyphs" >5k</text>
<circle cx="384.6" cy="460.6" r="19.7" fill="#090909"/>
<line x1="384.60" y1="444.10" x2="384.60" y2="441.60" stroke="#1a1a1a" stroke-width="1.4"/>
<line x1="387.18" y1="444.30" x2="387.57" y2="441.83" stroke="#1a1a1a" stroke-width="1.4"/>
<line x1="389.70" y1="444.91" x2="390.47" y2="442.53" stroke="#1a1a1a" stroke-width="1.4"/>
<line x1="392.09" y1="445.90" x2="393.23" y2="443.67" stroke="#1a1a1a" stroke-width="1.4"/>
<line x1="394.30" y1="447.25" x2="395.77" y2="445.23" stroke="#1a1a1a" stroke-width="1.4"/>
<line x1="396.27" y1="448.93" x2="398.04" y2="447.16" stroke="#1a1a1a" stroke-width="1.4"/>
<line x1="397.95" y1="450.90" x2="399.97" y2="449.43" stroke="#1a1a1a" stroke-width="1.4"/>
<line x1="399.30" y1="453.11" x2="401.53" y2="451.97" stroke="#1a1a1a" stroke-width="1.4"/>
<line x1="400.29" y1="455.50" x2="402.67" y2="454.73" stroke="#1a1a1a" stroke-width="1.4"/>
<line x1="400.90" y1="458.02" x2="403.37" y2="457.63" stroke="#1a1a1a" stroke-width="1.4"/>
<line x1="401.10" y1="460.60" x2="403.60" y2="460.60" stroke="#1a1a1a" stroke-width="1.4"/>
<line x1="400.90" y1="463.18" x2="403.37" y2="463.57" stroke="#1a1a1a" stroke-width="1.4"/>
<line x1="400.29" y1="465.70" x2="402.67" y2="466.47" stroke="#1a1a1a" stroke-width="1.4"/>
<line x1="399.30" y1="468.09" x2="401.53" y2="469.23" stroke="#1a1a1a" stroke-width="1.4"/>
<line x1="397.95" y1="470.30" x2="399.97" y2="471.77" stroke="#1a1a1a" stroke-width="1.4"/>
<line x1="396.27" y1="472.27" x2="398.04" y2="474.04" stroke="#1a1a1a" stroke-width="1.4"/>
<line x1="394.30" y1="473.95" x2="395.77" y2="475.97" stroke="#1a1a1a" stroke-width="1.4"/>
<line x1="392.09" y1="475.30" x2="393.23" y2="477.53" stroke="#1a1a1a" stroke-width="1.4"/>
<line x1="389.70" y1="476.29" x2="390.47" y2="478.67" stroke="#1a1a1a" stroke-width="1.4"/>
<line x1="387.18" y1="476.90" x2="387.57" y2="479.37" stroke="#1a1a1a" stroke-width="1.4"/>
<line x1="384.60" y1="477.10" x2="384.60" y2="479.60" stroke="#1a1a1a" stroke-width="1.4"/>
<line x1="382.02" y1="476.90" x2="381.63" y2="479.37" stroke="#1a1a1a" stroke-width="1.4"/>
<line x1="379.50" y1="476.29" x2="378.73" y2="478.67" stroke="#1a1a1a" stroke-width="1.4"/>
<line x1="377.11" y1="475.30" x2="375.97" y2="477.53" stroke="#1a1a1a" stroke-width="1.4"/>
<line x1="374.90" y1="473.95" x2="373.43" y2="475.97" stroke="#1a1a1a" stroke-width="1.4"/>
<line x1="372.93" y1="472.27" x2="371.16" y2="474.04" stroke="#1a1a1a" stroke-width="1.4"/>
<line x1="371.25" y1="470.30" x2="369.23" y2="471.77" stroke="#1a1a1a" stroke-width="1.4"/>
<line x1="369.90" y1="468.09" x2="367.67" y2="469.23" stroke="#1a1a1a" stroke-width="1.4"/>
<line x1="368.91" y1="465.70" x2="366.53" y2="466.47" stroke="#1a1a1a" stroke-width="1.4"/>
<line x1="368.30" y1="463.18" x2="365.83" y2="463.57" stroke="#1a1a1a" stroke-width="1.4"/>
<line x1="368.10" y1="460.60" x2="365.60" y2="460.60" stroke="#1a1a1a" stroke-width="1.4"/>
<line x1="368.30" y1="458.02" x2="365.83" y2="457.63" stroke="#1a1a1a" stroke-width="1.4"/>
<line x1="368.91" y1="455.50" x2="366.53" y2="454.73" stroke="#1a1a1a" stroke-width="1.4"/>
<line x1="369.90" y1="453.11" x2="367.67" y2="451.97" stroke="#1a1a1a" stroke-width="1.4"/>
<line x1="371.25" y1="450.90" x2="369.23" y2="449.43" stroke="#1a1a1a" stroke-width="1.4"/>
<line x1="372.93" y1="448.93" x2="371.16" y2="447.16" stroke="#1a1a1a" stroke-width="1.4"/>
<line x1="374.90" y1="447.25" x2="373.43" y2="445.23" stroke="#1a1a1a" stroke-width="1.4"/>
<line x1="377.11" y1="445.90" x2="375.97" y2="443.67" stroke="#1a1a1a" stroke-width="1.4"/>
<line x1="379.50" y1="444.91" x2="378.73" y2="442.53" stroke="#1a1a1a" stroke-width="1.4"/>
<line x1="382.02" y1="444.30" x2="381.63" y2="441.83" stroke="#1a1a1a" stroke-width="1.4"/>
<text x="55.70" y="417.28" font-size="10.27" fill="#bababa" text-anchor="middle" textLength="54.77" lengthAdjust="spacingAndGlyphs" >INPUT GAIN</text>
<circle cx="43.50" cy="481.96" r="0.95" fill="#a8a8a8"/>
<circle cx="31.77" cy="465.20" r="0.95" fill="#a8a8a8"/>
<circle cx="37.06" cy="445.44" r="0.95" fill="#a8a8a8"/>
<circle cx="55.60" cy="436.80" r="0.95" fill="#a8a8a8"/>
<circle cx="74.14" cy="445.44" r="0.95" fill="#a8a8a8"/>
<circle cx="79.43" cy="465.20" r="0.95" fill="#a8a8a8"/>
<circle cx="67.70" cy="481.96" r="0.95" fill="#a8a8a8"/>
<text x="55.60" y="430.50" font-size="7.81" fill="#a6a6a6" text-anchor="middle" textLength="4.06" lengthAdjust="spacingAndGlyphs" >0</text>
<text x="35.20" y="493.00" font-size="7.81" fill="#a6a6a6" text-anchor="middle" textLength="10.55" lengthAdjust="spacingAndGlyphs" >-30</text>
<text x="74.60" y="493.00" font-size="7.81" fill="#a6a6a6" text-anchor="middle" textLength="8.12" lengthAdjust="spacingAndGlyphs" >30</text>
<text x="55.60" y="497.80" font-size="7.81" fill="#a6a6a6" text-anchor="middle" textLength="8.93" lengthAdjust="spacingAndGlyphs" >dB</text>
<circle cx="55.6" cy="461" r="19.7" fill="#090909"/>
<line x1="55.60" y1="444.50" x2="55.60" y2="442.00" stroke="#1a1a1a" stroke-width="1.4"/>
<line x1="58.18" y1="444.70" x2="58.57" y2="442.23" stroke="#1a1a1a" stroke-width="1.4"/>
<line x1="60.70" y1="445.31" x2="61.47" y2="442.93" stroke="#1a1a1a" stroke-width="1.4"/>
<line x1="63.09" y1="446.30" x2="64.23" y2="444.07" stroke="#1a1a1a" stroke-width="1.4"/>
<line x1="65.30" y1="447.65" x2="66.77" y2="445.63" stroke="#1a1a1a" stroke-width="1.4"/>
<line x1="67.27" y1="449.33" x2="69.04" y2="447.56" stroke="#1a1a1a" stroke-width="1.4"/>
<line x1="68.95" y1="451.30" x2="70.97" y2="449.83" stroke="#1a1a1a" stroke-width="1.4"/>
<line x1="70.30" y1="453.51" x2="72.53" y2="452.37" stroke="#1a1a1a" stroke-width="1.4"/>
<line x1="71.29" y1="455.90" x2="73.67" y2="455.13" stroke="#1a1a1a" stroke-width="1.4"/>
<line x1="71.90" y1="458.42" x2="74.37" y2="458.03" stroke="#1a1a1a" stroke-width="1.4"/>
<line x1="72.10" y1="461.00" x2="74.60" y2="461.00" stroke="#1a1a1a" stroke-width="1.4"/>
<line x1="71.90" y1="463.58" x2="74.37" y2="463.97" stroke="#1a1a1a" stroke-width="1.4"/>
<line x1="71.29" y1="466.10" x2="73.67" y2="466.87" stroke="#1a1a1a" stroke-width="1.4"/>
<line x1="70.30" y1="468.49" x2="72.53" y2="469.63" stroke="#1a1a1a" stroke-width="1.4"/>
<line x1="68.95" y1="470.70" x2="70.97" y2="472.17" stroke="#1a1a1a" stroke-width="1.4"/>
<line x1="67.27" y1="472.67" x2="69.04" y2="474.44" stroke="#1a1a1a" stroke-width="1.4"/>
<line x1="65.30" y1="474.35" x2="66.77" y2="476.37" stroke="#1a1a1a" stroke-width="1.4"/>
<line x1="63.09" y1="475.70" x2="64.23" y2="477.93" stroke="#1a1a1a" stroke-width="1.4"/>
<line x1="60.70" y1="476.69" x2="61.47" y2="479.07" stroke="#1a1a1a" stroke-width="1.4"/>
<line x1="58.18" y1="477.30" x2="58.57" y2="479.77" stroke="#1a1a1a" stroke-width="1.4"/>
<line x1="55.60" y1="477.50" x2="55.60" y2="480.00" stroke="#1a1a1a" stroke-width="1.4"/>
<line x1="53.02" y1="477.30" x2="52.63" y2="479.77" stroke="#1a1a1a" stroke-width="1.4"/>
<line x1="50.50" y1="476.69" x2="49.73" y2="479.07" stroke="#1a1a1a" stroke-width="1.4"/>
<line x1="48.11" y1="475.70" x2="46.97" y2="477.93" stroke="#1a1a1a" stroke-width="1.4"/>
<line x1="45.90" y1="474.35" x2="44.43" y2="476.37" stroke="#1a1a1a" stroke-width="1.4"/>
<line x1="43.93" y1="472.67" x2="42.16" y2="474.44" stroke="#1a1a1a" stroke-width="1.4"/>
<line x1="42.25" y1="470.70" x2="40.23" y2="472.17" stroke="#1a1a1a" stroke-width="1.4"/>
<line x1="40.90" y1="468.49" x2="38.67" y2="469.63" stroke="#1a1a1a" stroke-width="1.4"/>
<line x1="39.91" y1="466.10" x2="37.53" y2="466.87" stroke="#1a1a1a" stroke-width="1.4"/>
<line x1="39.30" y1="463.58" x2="36.83" y2="463.97" stroke="#1a1a1a" stroke-width="1.4"/>
<line x1="39.10" y1="461.00" x2="36.60" y2="461.00" stroke="#1a1a1a" stroke-width="1.4"/>
<line x1="39.30" y1="458.42" x2="36.83" y2="458.03" stroke="#1a1a1a" stroke-width="1.4"/>
<line x1="39.91" y1="455.90" x2="37.53" y2="455.13" stroke="#1a1a1a" stroke-width="1.4"/>
<line x1="40.90" y1="453.51" x2="38.67" y2="452.37" stroke="#1a1a1a" stroke-width="1.4"/>
<line x1="42.25" y1="451.30" x2="40.23" y2="449.83" stroke="#1a1a1a" stroke-width="1.4"/>
<line x1="43.93" y1="449.33" x2="42.16" y2="447.56" stroke="#1a1a1a" stroke-width="1.4"/>
<line x1="45.90" y1="447.65" x2="44.43" y2="445.63" stroke="#1a1a1a" stroke-width="1.4"/>
<line x1="48.11" y1="446.30" x2="46.97" y2="444.07" stroke="#1a1a1a" stroke-width="1.4"/>
<line x1="50.50" y1="445.31" x2="49.73" y2="442.93" stroke="#1a1a1a" stroke-width="1.4"/>
<line x1="53.02" y1="444.70" x2="52.63" y2="442.23" stroke="#1a1a1a" stroke-width="1.4"/>
<text x="563.00" y="143.86" font-size="10.22" fill="#bababa" text-anchor="middle" textLength="37.67" lengthAdjust="spacingAndGlyphs" >LIMITER</text>
<circle cx="590.5" cy="139.9" r="4.3" fill="#150606"/>
<circle cx="590.5" cy="139.9" r="3.1" fill="url(#led)"/>
<rect x="545.3" y="155.4" width="33.7" height="23.5" rx="2.5" fill="#070707"/>
<rect x="546.9" y="157.0" width="30.500000000000004" height="20.3" rx="1.5" fill="#1d1d1d"/>
<text x="562.15" y="170.48" font-size="9.31" fill="#747474" text-anchor="middle" textLength="13.05" lengthAdjust="spacingAndGlyphs" >ON</text>
<text x="562.60" y="196.54" font-size="10.17" fill="#bababa" text-anchor="middle" textLength="58.59" lengthAdjust="spacingAndGlyphs" >THRESHOLD</text>
<circle cx="550.75" cy="253.97" r="0.95" fill="#a8a8a8"/>
<circle cx="541.93" cy="245.15" r="0.95" fill="#a8a8a8"/>
<circle cx="538.70" cy="233.10" r="0.95" fill="#a8a8a8"/>
<circle cx="541.93" cy="221.05" r="0.95" fill="#a8a8a8"/>
<circle cx="550.75" cy="212.23" r="0.95" fill="#a8a8a8"/>
<circle cx="562.80" cy="209.00" r="0.95" fill="#a8a8a8"/>
<circle cx="574.85" cy="212.23" r="0.95" fill="#a8a8a8"/>
<circle cx="583.67" cy="221.05" r="0.95" fill="#a8a8a8"/>
<circle cx="586.90" cy="233.10" r="0.95" fill="#a8a8a8"/>
<circle cx="583.67" cy="245.15" r="0.95" fill="#a8a8a8"/>
<circle cx="574.85" cy="253.97" r="0.95" fill="#a8a8a8"/>
<text x="544.80" y="206.10" font-size="7.81" fill="#a6a6a6" text-anchor="middle" textLength="6.49" lengthAdjust="spacingAndGlyphs" >-6</text>
<text x="581.00" y="206.10" font-size="7.81" fill="#a6a6a6" text-anchor="middle" textLength="6.49" lengthAdjust="spacingAndGlyphs" >-4</text>
<text x="528.80" y="236.50" font-size="7.81" fill="#a6a6a6" text-anchor="middle" textLength="6.49" lengthAdjust="spacingAndGlyphs" >-8</text>
<text x="597.00" y="236.50" font-size="7.81" fill="#a6a6a6" text-anchor="middle" textLength="6.49" lengthAdjust="spacingAndGlyphs" >-2</text>
<text x="542.50" y="264.90" font-size="7.81" fill="#a6a6a6" text-anchor="middle" textLength="10.55" lengthAdjust="spacingAndGlyphs" >-10</text>
<text x="580.40" y="264.90" font-size="7.81" fill="#a6a6a6" text-anchor="middle" textLength="4.06" lengthAdjust="spacingAndGlyphs" >0</text>
<text x="563.00" y="269.80" font-size="7.81" fill="#a6a6a6" text-anchor="middle" textLength="8.93" lengthAdjust="spacingAndGlyphs" >dB</text>
<circle cx="562.8" cy="233.1" r="19.7" fill="#090909"/>
<line x1="562.80" y1="216.60" x2="562.80" y2="214.10" stroke="#1a1a1a" stroke-width="1.4"/>
<line x1="565.38" y1="216.80" x2="565.77" y2="214.33" stroke="#1a1a1a" stroke-width="1.4"/>
<line x1="567.90" y1="217.41" x2="568.67" y2="215.03" stroke="#1a1a1a" stroke-width="1.4"/>
<line x1="570.29" y1="218.40" x2="571.43" y2="216.17" stroke="#1a1a1a" stroke-width="1.4"/>
<line x1="572.50" y1="219.75" x2="573.97" y2="217.73" stroke="#1a1a1a" stroke-width="1.4"/>
<line x1="574.47" y1="221.43" x2="576.24" y2="219.66" stroke="#1a1a1a" stroke-width="1.4"/>
<line x1="576.15" y1="223.40" x2="578.17" y2="221.93" stroke="#1a1a1a" stroke-width="1.4"/>
<line x1="577.50" y1="225.61" x2="579.73" y2="224.47" stroke="#1a1a1a" stroke-width="1.4"/>
<line x1="578.49" y1="228.00" x2="580.87" y2="227.23" stroke="#1a1a1a" stroke-width="1.4"/>
<line x1="579.10" y1="230.52" x2="581.57" y2="230.13" stroke="#1a1a1a" stroke-width="1.4"/>
<line x1="579.30" y1="233.10" x2="581.80" y2="233.10" stroke="#1a1a1a" stroke-width="1.4"/>
<line x1="579.10" y1="235.68" x2="581.57" y2="236.07" stroke="#1a1a1a" stroke-width="1.4"/>
<line x1="578.49" y1="238.20" x2="580.87" y2="238.97" stroke="#1a1a1a" stroke-width="1.4"/>
<line x1="577.50" y1="240.59" x2="579.73" y2="241.73" stroke="#1a1a1a" stroke-width="1.4"/>
<line x1="576.15" y1="242.80" x2="578.17" y2="244.27" stroke="#1a1a1a" stroke-width="1.4"/>
<line x1="574.47" y1="244.77" x2="576.24" y2="246.54" stroke="#1a1a1a" stroke-width="1.4"/>
<line x1="572.50" y1="246.45" x2="573.97" y2="248.47" stroke="#1a1a1a" stroke-width="1.4"/>
<line x1="570.29" y1="247.80" x2="571.43" y2="250.03" stroke="#1a1a1a" stroke-width="1.4"/>
<line x1="567.90" y1="248.79" x2="568.67" y2="251.17" stroke="#1a1a1a" stroke-width="1.4"/>
<line x1="565.38" y1="249.40" x2="565.77" y2="251.87" stroke="#1a1a1a" stroke-width="1.4"/>
<line x1="562.80" y1="249.60" x2="562.80" y2="252.10" stroke="#1a1a1a" stroke-width="1.4"/>
<line x1="560.22" y1="249.40" x2="559.83" y2="251.87" stroke="#1a1a1a" stroke-width="1.4"/>
<line x1="557.70" y1="248.79" x2="556.93" y2="251.17" stroke="#1a1a1a" stroke-width="1.4"/>
<line x1="555.31" y1="247.80" x2="554.17" y2="250.03" stroke="#1a1a1a" stroke-width="1.4"/>
<line x1="553.10" y1="246.45" x2="551.63" y2="248.47" stroke="#1a1a1a" stroke-width="1.4"/>
<line x1="551.13" y1="244.77" x2="549.36" y2="246.54" stroke="#1a1a1a" stroke-width="1.4"/>
<line x1="549.45" y1="242.80" x2="547.43" y2="244.27" stroke="#1a1a1a" stroke-width="1.4"/>
<line x1="548.10" y1="240.59" x2="545.87" y2="241.73" stroke="#1a1a1a" stroke-width="1.4"/>
<line x1="547.11" y1="238.20" x2="544.73" y2="238.97" stroke="#1a1a1a" stroke-width="1.4"/>
<line x1="546.50" y1="235.68" x2="544.03" y2="236.07" stroke="#1a1a1a" stroke-width="1.4"/>
<line x1="546.30" y1="233.10" x2="543.80" y2="233.10" stroke="#1a1a1a" stroke-width="1.4"/>
<line x1="546.50" y1="230.52" x2="544.03" y2="230.13" stroke="#1a1a1a" stroke-width="1.4"/>
<line x1="547.11" y1="228.00" x2="544.73" y2="227.23" stroke="#1a1a1a" stroke-width="1.4"/>
<line x1="548.10" y1="225.61" x2="545.87" y2="224.47" stroke="#1a1a1a" stroke-width="1.4"/>
<line x1="549.45" y1="223.40" x2="547.43" y2="221.93" stroke="#1a1a1a" stroke-width="1.4"/>
<line x1="551.13" y1="221.43" x2="549.36" y2="219.66" stroke="#1a1a1a" stroke-width="1.4"/>
<line x1="553.10" y1="219.75" x2="551.63" y2="217.73" stroke="#1a1a1a" stroke-width="1.4"/>
<line x1="555.31" y1="218.40" x2="554.17" y2="216.17" stroke="#1a1a1a" stroke-width="1.4"/>
<line x1="557.70" y1="217.41" x2="556.93" y2="215.03" stroke="#1a1a1a" stroke-width="1.4"/>
<line x1="560.22" y1="216.80" x2="559.83" y2="214.33" stroke="#1a1a1a" stroke-width="1.4"/>
<text x="563.20" y="318.22" font-size="10.11" fill="#bababa" text-anchor="middle" textLength="57.93" lengthAdjust="spacingAndGlyphs" >DISTORTION</text>
<circle cx="541.96" cy="349.05" r="0.95" fill="#a8a8a8"/>
<circle cx="554.52" cy="338.33" r="0.95" fill="#a8a8a8"/>
<circle cx="571.48" cy="338.33" r="0.95" fill="#a8a8a8"/>
<circle cx="584.04" cy="349.05" r="0.95" fill="#a8a8a8"/>
<text x="531.40" y="347.20" font-size="7.81" fill="#a6a6a6" text-anchor="middle" textLength="9.60" lengthAdjust="spacingAndGlyphs" >Off</text>
<text x="551.00" y="330.90" font-size="7.81" fill="#a6a6a6" text-anchor="middle" textLength="12.99" lengthAdjust="spacingAndGlyphs" >Soft</text>
<text x="577.10" y="330.90" font-size="7.81" fill="#a6a6a6" text-anchor="middle" textLength="15.82" lengthAdjust="spacingAndGlyphs" >Hard</text>
<text x="596.70" y="346.80" font-size="7.81" fill="#a6a6a6" text-anchor="middle" textLength="12.58" lengthAdjust="spacingAndGlyphs" >Clip</text>
<circle cx="563" cy="361" r="19.7" fill="#090909"/>
<line x1="563.00" y1="344.50" x2="563.00" y2="342.00" stroke="#1a1a1a" stroke-width="1.4"/>
<line x1="565.58" y1="344.70" x2="565.97" y2="342.23" stroke="#1a1a1a" stroke-width="1.4"/>
<line x1="568.10" y1="345.31" x2="568.87" y2="342.93" stroke="#1a1a1a" stroke-width="1.4"/>
<line x1="570.49" y1="346.30" x2="571.63" y2="344.07" stroke="#1a1a1a" stroke-width="1.4"/>
<line x1="572.70" y1="347.65" x2="574.17" y2="345.63" stroke="#1a1a1a" stroke-width="1.4"/>
<line x1="574.67" y1="349.33" x2="576.44" y2="347.56" stroke="#1a1a1a" stroke-width="1.4"/>
<line x1="576.35" y1="351.30" x2="578.37" y2="349.83" stroke="#1a1a1a" stroke-width="1.4"/>
<line x1="577.70" y1="353.51" x2="579.93" y2="352.37" stroke="#1a1a1a" stroke-width="1.4"/>
<line x1="578.69" y1="355.90" x2="581.07" y2="355.13" stroke="#1a1a1a" stroke-width="1.4"/>
<line x1="579.30" y1="358.42" x2="581.77" y2="358.03" stroke="#1a1a1a" stroke-width="1.4"/>
<line x1="579.50" y1="361.00" x2="582.00" y2="361.00" stroke="#1a1a1a" stroke-width="1.4"/>
<line x1="579.30" y1="363.58" x2="581.77" y2="363.97" stroke="#1a1a1a" stroke-width="1.4"/>
<line x1="578.69" y1="366.10" x2="581.07" y2="366.87" stroke="#1a1a1a" stroke-width="1.4"/>
<line x1="577.70" y1="368.49" x2="579.93" y2="369.63" stroke="#1a1a1a" stroke-width="1.4"/>
<line x1="576.35" y1="370.70" x2="578.37" y2="372.17" stroke="#1a1a1a" stroke-width="1.4"/>
<line x1="574.67" y1="372.67" x2="576.44" y2="374.44" stroke="#1a1a1a" stroke-width="1.4"/>
<line x1="572.70" y1="374.35" x2="574.17" y2="376.37" stroke="#1a1a1a" stroke-width="1.4"/>
<line x1="570.49" y1="375.70" x2="571.63" y2="377.93" stroke="#1a1a1a" stroke-width="1.4"/>
<line x1="568.10" y1="376.69" x2="568.87" y2="379.07" stroke="#1a1a1a" stroke-width="1.4"/>
<line x1="565.58" y1="377.30" x2="565.97" y2="379.77" stroke="#1a1a1a" stroke-width="1.4"/>
<line x1="563.00" y1="377.50" x2="563.00" y2="380.00" stroke="#1a1a1a" stroke-width="1.4"/>
<line x1="560.42" y1="377.30" x2="560.03" y2="379.77" stroke="#1a1a1a" stroke-width="1.4"/>
<line x1="557.90" y1="376.69" x2="557.13" y2="379.07" stroke="#1a1a1a" stroke-width="1.4"/>
<line x1="555.51" y1="375.70" x2="554.37" y2="377.93" stroke="#1a1a1a" stroke-width="1.4"/>
<line x1="553.30" y1="374.35" x2="551.83" y2="376.37" stroke="#1a1a1a" stroke-width="1.4"/>
<line x1="551.33" y1="372.67" x2="549.56" y2="374.44" stroke="#1a1a1a" stroke-width="1.4"/>
<line x1="549.65" y1="370.70" x2="547.63" y2="372.17" stroke="#1a1a1a" stroke-width="1.4"/>
<line x1="548.30" y1="368.49" x2="546.07" y2="369.63" stroke="#1a1a1a" stroke-width="1.4"/>
<line x1="547.31" y1="366.10" x2="544.93" y2="366.87" stroke="#1a1a1a" stroke-width="1.4"/>
<line x1="546.70" y1="363.58" x2="544.23" y2="363.97" stroke="#1a1a1a" stroke-width="1.4"/>
<line x1="546.50" y1="361.00" x2="544.00" y2="361.00" stroke="#1a1a1a" stroke-width="1.4"/>
<line x1="546.70" y1="358.42" x2="544.23" y2="358.03" stroke="#1a1a1a" stroke-width="1.4"/>
<line x1="547.31" y1="355.90" x2="544.93" y2="355.13" stroke="#1a1a1a" stroke-width="1.4"/>
<line x1="548.30" y1="353.51" x2="546.07" y2="352.37" stroke="#1a1a1a" stroke-width="1.4"/>
<line x1="549.65" y1="351.30" x2="547.63" y2="349.83" stroke="#1a1a1a" stroke-width="1.4"/>
<line x1="551.33" y1="349.33" x2="549.56" y2="347.56" stroke="#1a1a1a" stroke-width="1.4"/>
<line x1="553.30" y1="347.65" x2="551.83" y2="345.63" stroke="#1a1a1a" stroke-width="1.4"/>
<line x1="555.51" y1="346.30" x2="554.37" y2="344.07" stroke="#1a1a1a" stroke-width="1.4"/>
<line x1="557.90" y1="345.31" x2="557.13" y2="342.93" stroke="#1a1a1a" stroke-width="1.4"/>
<line x1="560.42" y1="344.70" x2="560.03" y2="342.23" stroke="#1a1a1a" stroke-width="1.4"/>
<text x="563.30" y="416.98" font-size="10.27" fill="#bababa" text-anchor="middle" textLength="17.07" lengthAdjust="spacingAndGlyphs" >MIX</text>
<circle cx="550.80" cy="482.43" r="0.95" fill="#a8a8a8"/>
<circle cx="541.87" cy="473.50" r="0.95" fill="#a8a8a8"/>
<circle cx="538.60" cy="461.30" r="0.95" fill="#a8a8a8"/>
<circle cx="541.87" cy="449.10" r="0.95" fill="#a8a8a8"/>
<circle cx="550.80" cy="440.17" r="0.95" fill="#a8a8a8"/>
<circle cx="563.00" cy="436.90" r="0.95" fill="#a8a8a8"/>
<circle cx="575.20" cy="440.17" r="0.95" fill="#a8a8a8"/>
<circle cx="584.13" cy="449.10" r="0.95" fill="#a8a8a8"/>
<circle cx="587.40" cy="461.30" r="0.95" fill="#a8a8a8"/>
<circle cx="584.13" cy="473.50" r="0.95" fill="#a8a8a8"/>
<circle cx="575.20" cy="482.43" r="0.95" fill="#a8a8a8"/>
<text x="563.30" y="430.20" font-size="7.81" fill="#a6a6a6" text-anchor="middle" textLength="10.15" lengthAdjust="spacingAndGlyphs" >1:1</text>
<text x="539.50" y="492.50" font-size="7.81" fill="#a6a6a6" text-anchor="middle" textLength="16.24" lengthAdjust="spacingAndGlyphs" >Input</text>
<text x="589.30" y="492.50" font-size="7.81" fill="#a6a6a6" text-anchor="middle" textLength="21.91" lengthAdjust="spacingAndGlyphs" >Output</text>
<circle cx="563" cy="461.3" r="19.7" fill="#090909"/>
<line x1="563.00" y1="444.80" x2="563.00" y2="442.30" stroke="#1a1a1a" stroke-width="1.4"/>
<line x1="565.58" y1="445.00" x2="565.97" y2="442.53" stroke="#1a1a1a" stroke-width="1.4"/>
<line x1="568.10" y1="445.61" x2="568.87" y2="443.23" stroke="#1a1a1a" stroke-width="1.4"/>
<line x1="570.49" y1="446.60" x2="571.63" y2="444.37" stroke="#1a1a1a" stroke-width="1.4"/>
<line x1="572.70" y1="447.95" x2="574.17" y2="445.93" stroke="#1a1a1a" stroke-width="1.4"/>
<line x1="574.67" y1="449.63" x2="576.44" y2="447.86" stroke="#1a1a1a" stroke-width="1.4"/>
<line x1="576.35" y1="451.60" x2="578.37" y2="450.13" stroke="#1a1a1a" stroke-width="1.4"/>
<line x1="577.70" y1="453.81" x2="579.93" y2="452.67" stroke="#1a1a1a" stroke-width="1.4"/>
<line x1="578.69" y1="456.20" x2="581.07" y2="455.43" stroke="#1a1a1a" stroke-width="1.4"/>
<line x1="579.30" y1="458.72" x2="581.77" y2="458.33" stroke="#1a1a1a" stroke-width="1.4"/>
<line x1="579.50" y1="461.30" x2="582.00" y2="461.30" stroke="#1a1a1a" stroke-width="1.4"/>
<line x1="579.30" y1="463.88" x2="581.77" y2="464.27" stroke="#1a1a1a" stroke-width="1.4"/>
<line x1="578.69" y1="466.40" x2="581.07" y2="467.17" stroke="#1a1a1a" stroke-width="1.4"/>
<line x1="577.70" y1="468.79" x2="579.93" y2="469.93" stroke="#1a1a1a" stroke-width="1.4"/>
<line x1="576.35" y1="471.00" x2="578.37" y2="472.47" stroke="#1a1a1a" stroke-width="1.4"/>
<line x1="574.67" y1="472.97" x2="576.44" y2="474.74" stroke="#1a1a1a" stroke-width="1.4"/>
<line x1="572.70" y1="474.65" x2="574.17" y2="476.67" stroke="#1a1a1a" stroke-width="1.4"/>
<line x1="570.49" y1="476.00" x2="571.63" y2="478.23" stroke="#1a1a1a" stroke-width="1.4"/>
<line x1="568.10" y1="476.99" x2="568.87" y2="479.37" stroke="#1a1a1a" stroke-width="1.4"/>
<line x1="565.58" y1="477.60" x2="565.97" y2="480.07" stroke="#1a1a1a" stroke-width="1.4"/>
<line x1="563.00" y1="477.80" x2="563.00" y2="480.30" stroke="#1a1a1a" stroke-width="1.4"/>
<line x1="560.42" y1="477.60" x2="560.03" y2="480.07" stroke="#1a1a1a" stroke-width="1.4"/>
<line x1="557.90" y1="476.99" x2="557.13" y2="479.37" stroke="#1a1a1a" stroke-width="1.4"/>
<line x1="555.51" y1="476.00" x2="554.37" y2="478.23" stroke="#1a1a1a" stroke-width="1.4"/>
<line x1="553.30" y1="474.65" x2="551.83" y2="476.67" stroke="#1a1a1a" stroke-width="1.4"/>
<line x1="551.33" y1="472.97" x2="549.56" y2="474.74" stroke="#1a1a1a" stroke-width="1.4"/>
<line x1="549.65" y1="471.00" x2="547.63" y2="472.47" stroke="#1a1a1a" stroke-width="1.4"/>
<line x1="548.30" y1="468.79" x2="546.07" y2="469.93" stroke="#1a1a1a" stroke-width="1.4"/>
<line x1="547.31" y1="466.40" x2="544.93" y2="467.17" stroke="#1a1a1a" stroke-width="1.4"/>
<line x1="546.70" y1="463.88" x2="544.23" y2="464.27" stroke="#1a1a1a" stroke-width="1.4"/>
<line x1="546.50" y1="461.30" x2="544.00" y2="461.30" stroke="#1a1a1a" stroke-width="1.4"/>
<line x1="546.70" y1="458.72" x2="544.23" y2="458.33" stroke="#1a1a1a" stroke-width="1.4"/>
<line x1="547.31" y1="456.20" x2="544.93" y2="455.43" stroke="#1a1a1a" stroke-width="1.4"/>
<line x1="548.30" y1="453.81" x2="546.07" y2="452.67" stroke="#1a1a1a" stroke-width="1.4"/>
<line x1="549.65" y1="451.60" x2="547.63" y2="450.13" stroke="#1a1a1a" stroke-width="1.4"/>
<line x1="551.33" y1="449.63" x2="549.56" y2="447.86" stroke="#1a1a1a" stroke-width="1.4"/>
<line x1="553.30" y1="447.95" x2="551.83" y2="445.93" stroke="#1a1a1a" stroke-width="1.4"/>
<line x1="555.51" y1="446.60" x2="554.37" y2="444.37" stroke="#1a1a1a" stroke-width="1.4"/>
<line x1="557.90" y1="445.61" x2="557.13" y2="443.23" stroke="#1a1a1a" stroke-width="1.4"/>
<line x1="560.42" y1="445.00" x2="560.03" y2="442.53" stroke="#1a1a1a" stroke-width="1.4"/>
<text x="639.40" y="416.98" font-size="10.27" fill="#bababa" text-anchor="middle" textLength="65.43" lengthAdjust="spacingAndGlyphs" >OUTPUT GAIN</text>
<circle cx="626.80" cy="482.60" r="0.95" fill="#a8a8a8"/>
<circle cx="614.87" cy="465.57" r="0.95" fill="#a8a8a8"/>
<circle cx="620.26" cy="445.49" r="0.95" fill="#a8a8a8"/>
<circle cx="639.10" cy="436.70" r="0.95" fill="#a8a8a8"/>
<circle cx="657.94" cy="445.49" r="0.95" fill="#a8a8a8"/>
<circle cx="663.33" cy="465.57" r="0.95" fill="#a8a8a8"/>
<circle cx="651.40" cy="482.60" r="0.95" fill="#a8a8a8"/>
<text x="638.60" y="430.20" font-size="7.81" fill="#a6a6a6" text-anchor="middle" textLength="4.06" lengthAdjust="spacingAndGlyphs" >0</text>
<text x="618.00" y="492.50" font-size="7.81" fill="#a6a6a6" text-anchor="middle" textLength="10.55" lengthAdjust="spacingAndGlyphs" >-30</text>
<text x="657.70" y="492.50" font-size="7.81" fill="#a6a6a6" text-anchor="middle" textLength="8.12" lengthAdjust="spacingAndGlyphs" >30</text>
<text x="638.60" y="498.00" font-size="7.81" fill="#a6a6a6" text-anchor="middle" textLength="8.93" lengthAdjust="spacingAndGlyphs" >dB</text>
<circle cx="639.1" cy="461.3" r="19.7" fill="#090909"/>
<line x1="639.10" y1="444.80" x2="639.10" y2="442.30" stroke="#1a1a1a" stroke-width="1.4"/>
<line x1="641.68" y1="445.00" x2="642.07" y2="442.53" stroke="#1a1a1a" stroke-width="1.4"/>
<line x1="644.20" y1="445.61" x2="644.97" y2="443.23" stroke="#1a1a1a" stroke-width="1.4"/>
<line x1="646.59" y1="446.60" x2="647.73" y2="444.37" stroke="#1a1a1a" stroke-width="1.4"/>
<line x1="648.80" y1="447.95" x2="650.27" y2="445.93" stroke="#1a1a1a" stroke-width="1.4"/>
<line x1="650.77" y1="449.63" x2="652.54" y2="447.86" stroke="#1a1a1a" stroke-width="1.4"/>
<line x1="652.45" y1="451.60" x2="654.47" y2="450.13" stroke="#1a1a1a" stroke-width="1.4"/>
<line x1="653.80" y1="453.81" x2="656.03" y2="452.67" stroke="#1a1a1a" stroke-width="1.4"/>
<line x1="654.79" y1="456.20" x2="657.17" y2="455.43" stroke="#1a1a1a" stroke-width="1.4"/>
<line x1="655.40" y1="458.72" x2="657.87" y2="458.33" stroke="#1a1a1a" stroke-width="1.4"/>
<line x1="655.60" y1="461.30" x2="658.10" y2="461.30" stroke="#1a1a1a" stroke-width="1.4"/>
<line x1="655.40" y1="463.88" x2="657.87" y2="464.27" stroke="#1a1a1a" stroke-width="1.4"/>
<line x1="654.79" y1="466.40" x2="657.17" y2="467.17" stroke="#1a1a1a" stroke-width="1.4"/>
<line x1="653.80" y1="468.79" x2="656.03" y2="469.93" stroke="#1a1a1a" stroke-width="1.4"/>
<line x1="652.45" y1="471.00" x2="654.47" y2="472.47" stroke="#1a1a1a" stroke-width="1.4"/>
<line x1="650.77" y1="472.97" x2="652.54" y2="474.74" stroke="#1a1a1a" stroke-width="1.4"/>
<line x1="648.80" y1="474.65" x2="650.27" y2="476.67" stroke="#1a1a1a" stroke-width="1.4"/>
<line x1="646.59" y1="476.00" x2="647.73" y2="478.23" stroke="#1a1a1a" stroke-width="1.4"/>
<line x1="644.20" y1="476.99" x2="644.97" y2="479.37" stroke="#1a1a1a" stroke-width="1.4"/>
<line x1="641.68" y1="477.60" x2="642.07" y2="480.07" stroke="#1a1a1a" stroke-width="1.4"/>
<line x1="639.10" y1="477.80" x2="639.10" y2="480.30" stroke="#1a1a1a" stroke-width="1.4"/>
<line x1="636.52" y1="477.60" x2="636.13" y2="480.07" stroke="#1a1a1a" stroke-width="1.4"/>
<line x1="634.00" y1="476.99" x2="633.23" y2="479.37" stroke="#1a1a1a" stroke-width="1.4"/>
<line x1="631.61" y1="476.00" x2="630.47" y2="478.23" stroke="#1a1a1a" stroke-width="1.4"/>
<line x1="629.40" y1="474.65" x2="627.93" y2="476.67" stroke="#1a1a1a" stroke-width="1.4"/>
<line x1="627.43" y1="472.97" x2="625.66" y2="474.74" stroke="#1a1a1a" stroke-width="1.4"/>
<line x1="625.75" y1="471.00" x2="623.73" y2="472.47" stroke="#1a1a1a" stroke-width="1.4"/>
<line x1="624.40" y1="468.79" x2="622.17" y2="469.93" stroke="#1a1a1a" stroke-width="1.4"/>
<line x1="623.41" y1="466.40" x2="621.03" y2="467.17" stroke="#1a1a1a" stroke-width="1.4"/>
<line x1="622.80" y1="463.88" x2="620.33" y2="464.27" stroke="#1a1a1a" stroke-width="1.4"/>
<line x1="622.60" y1="461.30" x2="620.10" y2="461.30" stroke="#1a1a1a" stroke-width="1.4"/>
<line x1="622.80" y1="458.72" x2="620.33" y2="458.33" stroke="#1a1a1a" stroke-width="1.4"/>
<line x1="623.41" y1="456.20" x2="621.03" y2="455.43" stroke="#1a1a1a" stroke-width="1.4"/>
<line x1="624.40" y1="453.81" x2="622.17" y2="452.67" stroke="#1a1a1a" stroke-width="1.4"/>
<line x1="625.75" y1="451.60" x2="623.73" y2="450.13" stroke="#1a1a1a" stroke-width="1.4"/>
<line x1="627.43" y1="449.63" x2="625.66" y2="447.86" stroke="#1a1a1a" stroke-width="1.4"/>
<line x1="629.40" y1="447.95" x2="627.93" y2="445.93" stroke="#1a1a1a" stroke-width="1.4"/>
<line x1="631.61" y1="446.60" x2="630.47" y2="444.37" stroke="#1a1a1a" stroke-width="1.4"/>
<line x1="634.00" y1="445.61" x2="633.23" y2="443.23" stroke="#1a1a1a" stroke-width="1.4"/>
<line x1="636.52" y1="445.00" x2="636.13" y2="442.53" stroke="#1a1a1a" stroke-width="1.4"/>
<text x="351.30" y="529.27" font-size="17.23" fill="#8c8c8c" text-anchor="middle" textLength="87.68" lengthAdjust="spacingAndGlyphs" >Compressor</text>
</svg>
<div class="knob dk" style="left:158.60px;top:341.90px;width:30.80px;height:30.80px;background:linear-gradient(rgba(255,255,255,0.06), rgba(0,0,0,0.06)), conic-gradient(from 0deg, #fafafa 0deg, #e4e4e4 7deg, #c8c8c8 17deg, #adadad 32deg, #999999 58deg, #8a8a8a 90deg, #979797 122deg, #adadad 148deg, #c8c8c8 163deg, #e4e4e4 173deg, #fafafa 180deg, #e4e4e4 187deg, #c8c8c8 197deg, #adadad 212deg, #999999 238deg, #888888 270deg, #999999 302deg, #adadad 328deg, #c8c8c8 343deg, #e4e4e4 353deg, #fafafa 360deg)"></div><div class="knob dk" style="left:264.20px;top:341.60px;width:30.80px;height:30.80px;background:linear-gradient(rgba(255,255,255,0.06), rgba(0,0,0,0.06)), conic-gradient(from 0deg, #fafafa 0deg, #e4e4e4 7deg, #c8c8c8 17deg, #adadad 32deg, #999999 58deg, #8a8a8a 90deg, #979797 122deg, #adadad 148deg, #c8c8c8 163deg, #e4e4e4 173deg, #fafafa 180deg, #e4e4e4 187deg, #c8c8c8 197deg, #adadad 212deg, #999999 238deg, #888888 270deg, #999999 302deg, #adadad 328deg, #c8c8c8 343deg, #e4e4e4 353deg, #fafafa 360deg)"></div><div class="knob dk" style="left:368.70px;top:342.10px;width:30.80px;height:30.80px;background:linear-gradient(rgba(255,255,255,0.06), rgba(0,0,0,0.06)), conic-gradient(from 0deg, #fafafa 0deg, #e4e4e4 7deg, #c8c8c8 17deg, #adadad 32deg, #999999 58deg, #8a8a8a 90deg, #979797 122deg, #adadad 148deg, #c8c8c8 163deg, #e4e4e4 173deg, #fafafa 180deg, #e4e4e4 187deg, #c8c8c8 197deg, #adadad 212deg, #999999 238deg, #888888 270deg, #999999 302deg, #adadad 328deg, #c8c8c8 343deg, #e4e4e4 353deg, #fafafa 360deg)"></div><div class="knob" style="left:263.20px;top:444.90px;width:31.40px;height:31.40px;background:linear-gradient(rgba(255,255,255,0.08), rgba(0,0,0,0.04)), conic-gradient(from 0deg, #ffffff 0deg, #efefef 7deg, #d8d8d8 17deg, #c0c0c0 32deg, #adadad 58deg, #9e9e9e 90deg, #aaaaaa 122deg, #c0c0c0 148deg, #d8d8d8 163deg, #efefef 173deg, #ffffff 180deg, #efefef 187deg, #d8d8d8 197deg, #c0c0c0 212deg, #aeaeae 238deg, #a2a2a2 270deg, #b0b0b0 302deg, #c0c0c0 328deg, #d8d8d8 343deg, #efefef 353deg, #ffffff 360deg)"></div><div class="knob" style="left:368.90px;top:444.90px;width:31.40px;height:31.40px;background:linear-gradient(rgba(255,255,255,0.08), rgba(0,0,0,0.04)), conic-gradient(from 0deg, #ffffff 0deg, #efefef 7deg, #d8d8d8 17deg, #c0c0c0 32deg, #adadad 58deg, #9e9e9e 90deg, #aaaaaa 122deg, #c0c0c0 148deg, #d8d8d8 163deg, #efefef 173deg, #ffffff 180deg, #efefef 187deg, #d8d8d8 197deg, #c0c0c0 212deg, #aeaeae 238deg, #a2a2a2 270deg, #b0b0b0 302deg, #c0c0c0 328deg, #d8d8d8 343deg, #efefef 353deg, #ffffff 360deg)"></div><div class="knob" style="left:39.90px;top:445.30px;width:31.40px;height:31.40px;background:linear-gradient(rgba(255,255,255,0.08), rgba(0,0,0,0.04)), conic-gradient(from 0deg, #ffffff 0deg, #efefef 7deg, #d8d8d8 17deg, #c0c0c0 32deg, #adadad 58deg, #9e9e9e 90deg, #aaaaaa 122deg, #c0c0c0 148deg, #d8d8d8 163deg, #efefef 173deg, #ffffff 180deg, #efefef 187deg, #d8d8d8 197deg, #c0c0c0 212deg, #aeaeae 238deg, #a2a2a2 270deg, #b0b0b0 302deg, #c0c0c0 328deg, #d8d8d8 343deg, #efefef 353deg, #ffffff 360deg)"></div><div class="knob" style="left:547.10px;top:217.40px;width:31.40px;height:31.40px;background:linear-gradient(rgba(255,255,255,0.08), rgba(0,0,0,0.04)), conic-gradient(from 0deg, #ffffff 0deg, #efefef 7deg, #d8d8d8 17deg, #c0c0c0 32deg, #adadad 58deg, #9e9e9e 90deg, #aaaaaa 122deg, #c0c0c0 148deg, #d8d8d8 163deg, #efefef 173deg, #ffffff 180deg, #efefef 187deg, #d8d8d8 197deg, #c0c0c0 212deg, #aeaeae 238deg, #a2a2a2 270deg, #b0b0b0 302deg, #c0c0c0 328deg, #d8d8d8 343deg, #efefef 353deg, #ffffff 360deg)"></div><div class="knob" style="left:547.30px;top:345.30px;width:31.40px;height:31.40px;background:linear-gradient(rgba(255,255,255,0.08), rgba(0,0,0,0.04)), conic-gradient(from 0deg, #ffffff 0deg, #efefef 7deg, #d8d8d8 17deg, #c0c0c0 32deg, #adadad 58deg, #9e9e9e 90deg, #aaaaaa 122deg, #c0c0c0 148deg, #d8d8d8 163deg, #efefef 173deg, #ffffff 180deg, #efefef 187deg, #d8d8d8 197deg, #c0c0c0 212deg, #aeaeae 238deg, #a2a2a2 270deg, #b0b0b0 302deg, #c0c0c0 328deg, #d8d8d8 343deg, #efefef 353deg, #ffffff 360deg)"></div><div class="knob" style="left:547.30px;top:445.60px;width:31.40px;height:31.40px;background:linear-gradient(rgba(255,255,255,0.08), rgba(0,0,0,0.04)), conic-gradient(from 0deg, #ffffff 0deg, #efefef 7deg, #d8d8d8 17deg, #c0c0c0 32deg, #adadad 58deg, #9e9e9e 90deg, #aaaaaa 122deg, #c0c0c0 148deg, #d8d8d8 163deg, #efefef 173deg, #ffffff 180deg, #efefef 187deg, #d8d8d8 197deg, #c0c0c0 212deg, #aeaeae 238deg, #a2a2a2 270deg, #b0b0b0 302deg, #c0c0c0 328deg, #d8d8d8 343deg, #efefef 353deg, #ffffff 360deg)"></div><div class="knob" style="left:623.40px;top:445.60px;width:31.40px;height:31.40px;background:linear-gradient(rgba(255,255,255,0.08), rgba(0,0,0,0.04)), conic-gradient(from 0deg, #ffffff 0deg, #efefef 7deg, #d8d8d8 17deg, #c0c0c0 32deg, #adadad 58deg, #9e9e9e 90deg, #aaaaaa 122deg, #c0c0c0 148deg, #d8d8d8 163deg, #efefef 173deg, #ffffff 180deg, #efefef 187deg, #d8d8d8 197deg, #c0c0c0 212deg, #aeaeae 238deg, #a2a2a2 270deg, #b0b0b0 302deg, #c0c0c0 328deg, #d8d8d8 343deg, #efefef 353deg, #ffffff 360deg)"></div>
<svg class="l" width="702" height="552" viewBox="0 0 702 552">
<circle cx="271.47" cy="453.91" r="2.3" fill="#8a8a8a" fill-opacity="0.5" stroke="#151515" stroke-width="1.15"/>
<circle cx="394.60" cy="460.60" r="2.3" fill="#8a8a8a" fill-opacity="0.5" stroke="#151515" stroke-width="1.15"/>
<circle cx="55.60" cy="451.00" r="2.3" fill="#8a8a8a" fill-opacity="0.5" stroke="#151515" stroke-width="1.15"/>
<circle cx="568.52" cy="242.26" r="2.3" fill="#8a8a8a" fill-opacity="0.5" stroke="#151515" stroke-width="1.15"/>
<circle cx="554.29" cy="356.29" r="2.3" fill="#8a8a8a" fill-opacity="0.5" stroke="#151515" stroke-width="1.15"/>
<circle cx="567.69" cy="470.13" r="2.3" fill="#8a8a8a" fill-opacity="0.5" stroke="#151515" stroke-width="1.15"/>
<circle cx="639.10" cy="450.50" r="2.3" fill="#8a8a8a" fill-opacity="0.5" stroke="#151515" stroke-width="1.15"/>
</svg>
</body></html>
